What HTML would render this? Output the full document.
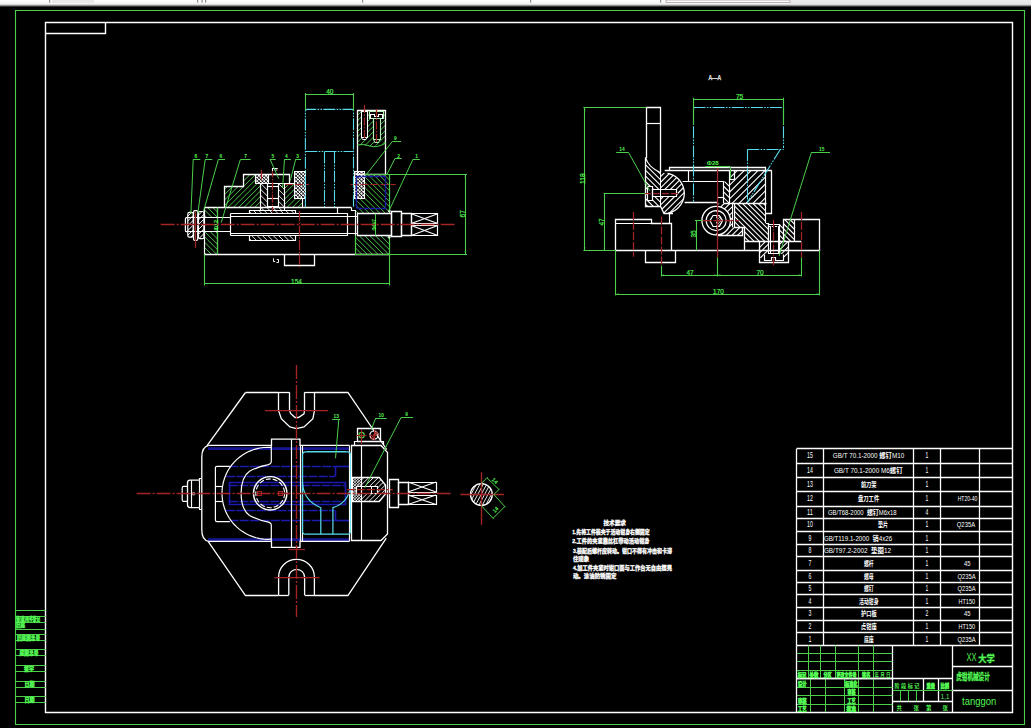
<!DOCTYPE html>
<html><head><meta charset="utf-8"><title>drawing</title>
<style>
html,body{margin:0;padding:0;background:#000;overflow:hidden}
body{width:1031px;height:728px;position:relative}
svg{position:absolute;left:0;top:0;display:block}
svg text{font-family:"Liberation Sans","Noto Sans CJK SC",sans-serif;white-space:pre}
</style></head><body>
<svg width="1031" height="728" viewBox="0 0 1031 728" stroke-linecap="butt">
<defs>
<linearGradient id="tb" x1="0" y1="0" x2="0" y2="1"><stop offset="0" stop-color="#fdfdfd"/><stop offset="0.58" stop-color="#f2f2f2"/><stop offset="0.8" stop-color="#8a8a8a"/><stop offset="1" stop-color="#000"/></linearGradient>
<linearGradient id="tb2" x1="0" y1="0" x2="0" y2="1"><stop offset="0" stop-color="#ececec"/><stop offset="0.62" stop-color="#e4e4e4"/><stop offset="0.82" stop-color="#808080"/><stop offset="1" stop-color="#000"/></linearGradient>
<clipPath id="h1"><path d="M204.5 207.4 L217.6 207.4 L217.6 217.6 L204.5 217.6Z" clip-rule="evenodd" fill-rule="evenodd"/></clipPath>
<clipPath id="h2"><path d="M204.5 231.6 L217.6 231.6 L217.6 254.3 L204.5 254.3Z" clip-rule="evenodd" fill-rule="evenodd"/></clipPath>
<clipPath id="h3"><path d="M224.5 206.9 L224.5 186.6 L243.8 186.6 L243.8 174.7 L255.4 174.7 L255.4 183.5 L260.3 183.5 L260.3 206.9Z" clip-rule="evenodd" fill-rule="evenodd"/></clipPath>
<clipPath id="h4"><path d="M284 183.5 L294.2 183.5 L294.2 198.6 L302.4 198.6 L302.4 206.9 L284 206.9Z" clip-rule="evenodd" fill-rule="evenodd"/></clipPath>
<clipPath id="h5"><path d="M260.3 183.5 L267 183.5 L267 206.9 L278.2 206.9 L278.2 183.5 L284 183.5 L284 210.4 L260.3 210.4Z" clip-rule="evenodd" fill-rule="evenodd"/></clipPath>
<clipPath id="h6"><path d="M255.6 174.9 L268.7 174.9 L268.7 183.4 L255.6 183.4Z" clip-rule="evenodd" fill-rule="evenodd"/></clipPath>
<clipPath id="h7"><path d="M255.6 174.9 L268.7 174.9 L268.7 183.4 L255.6 183.4Z" clip-rule="evenodd" fill-rule="evenodd"/></clipPath>
<clipPath id="h8"><path d="M294.4 171.5 L305 171.5 L305 198.6 L294.4 198.6Z" clip-rule="evenodd" fill-rule="evenodd"/></clipPath>
<clipPath id="h9"><path d="M294.4 171.5 L305 171.5 L305 198.6 L294.4 198.6Z" clip-rule="evenodd" fill-rule="evenodd"/></clipPath>
<clipPath id="h10"><path d="M354.4 171.5 L364.6 171.5 L364.6 198.6 L354.4 198.6Z" clip-rule="evenodd" fill-rule="evenodd"/></clipPath>
<clipPath id="h11"><path d="M354.4 171.5 L364.6 171.5 L364.6 198.6 L354.4 198.6Z" clip-rule="evenodd" fill-rule="evenodd"/></clipPath>
<clipPath id="h12"><path d="M249.2 210.4 L295.4 210.4 L295.4 213.5 L249.2 213.5Z" clip-rule="evenodd" fill-rule="evenodd"/></clipPath>
<clipPath id="h13"><path d="M249.2 235.6 L295.4 235.6 L295.4 240 L249.2 240Z" clip-rule="evenodd" fill-rule="evenodd"/></clipPath>
<clipPath id="h14"><path d="M364.6 174.2 L389.4 174.2 L389.4 213.4 L355.6 213.4 L355.6 198.6 L364.6 198.6Z" clip-rule="evenodd" fill-rule="evenodd"/></clipPath>
<clipPath id="h15"><path d="M355.6 235.6 L389.2 235.6 L389.2 254.2 L355.6 254.2Z" clip-rule="evenodd" fill-rule="evenodd"/></clipPath>
<clipPath id="h16"><path d="M357.3 110.2 L385.8 110.2 L385.8 143 L372 146.5 L357.3 145Z M361.5 110.2 L367 110.2 L367 139 L361.5 139Z M369.8 110.2 L383.4 110.2 L383.4 118.8 L380 118.8 L380 141.5 L373.4 141.5 L373.4 118.8 L369.8 118.8Z" clip-rule="evenodd" fill-rule="evenodd"/></clipPath>
<clipPath id="h17"><path d="M187.8 212.4 L193.2 212.4 L193.2 237.1 L187.8 237.1Z" clip-rule="evenodd" fill-rule="evenodd"/></clipPath>
<clipPath id="h18"><path d="M198.5 211.5 L203.9 211.5 L203.9 238.7 L198.5 238.7Z" clip-rule="evenodd" fill-rule="evenodd"/></clipPath>
<clipPath id="h19"><path d="M645.6 157.6 L648 163 L652 168 L660.6 172.7 L660.6 206.3 L645.6 206.3Z M647.6 186.4 L652.4 186.4 L652.4 189.8 L660.6 189.8 L660.6 196.7 L652.4 196.7 L652.4 200.1 L647.6 200.1Z" clip-rule="evenodd" fill-rule="evenodd"/></clipPath>
<clipPath id="h20"><path d="M660.6 172.7 L667.53 173.31 L670.53 174.08 L673.39 175.3 L676.03 176.95 L678.38 178.97 L680.4 181.34 L682.03 183.98 L683.24 186.84 L684.01 189.85 L684.3 192.95 L684.11 196.05 L683.46 199.08 L682.35 201.99 L680.81 204.68 L678.87 207.12 L676.59 209.22 L674.01 210.96 L671.2 212.28 L668.22 213.16 L664 213.2 L660.6 206.3Z M660.6 189.8 L676.4 189.8 L676.4 196.7 L660.6 196.7Z" clip-rule="evenodd" fill-rule="evenodd"/></clipPath>
<clipPath id="h21"><path d="M723.8 181.6 L729.6 181.6 L729.6 203.4 L723.8 203.4Z" clip-rule="evenodd" fill-rule="evenodd"/></clipPath>
<clipPath id="h22"><path d="M729.6 170.4 L765.8 170.4 L765.8 203.5 L729.6 203.5Z" clip-rule="evenodd" fill-rule="evenodd"/></clipPath>
<clipPath id="h23"><path d="M734.2 203.5 L765.8 203.5 L765.8 223 L768.2 223 L768.2 241.4 L744.6 241.4 L744.6 227.3 L734.2 227.3Z" clip-rule="evenodd" fill-rule="evenodd"/></clipPath>
<clipPath id="h24"><path d="M717.3 203.5 L732.7 203.5 L732.7 227.3 L742.5 227.3 L742.5 235.8 L717.3 235.8Z M716.2 206.3 L719.9 206.79 L723.35 208.22 L726.31 210.49 L728.58 213.45 L730.01 216.9 L730.5 220.6 L730.01 224.3 L728.58 227.75 L726.31 230.71 L723.35 232.98 L719.9 234.41 L716.2 234.9Z" clip-rule="evenodd" fill-rule="evenodd"/></clipPath>
<clipPath id="h25"><path d="M716.2 214.6 L718.5 215.06 L720.44 216.36 L721.74 218.3 L722.2 220.6 L721.74 222.9 L720.44 224.84 L718.5 226.14 L716.2 226.6Z" clip-rule="evenodd" fill-rule="evenodd"/></clipPath>
<clipPath id="h26"><path d="M783.4 219.6 L794.6 219.6 L794.6 241.7 L779.7 241.7 L779.7 224 L783.4 224Z" clip-rule="evenodd" fill-rule="evenodd"/></clipPath>
<clipPath id="h27"><path d="M759.6 241.4 L769.2 241.4 L769.2 254 L764.7 254 L764.7 258 L759.6 258Z" clip-rule="evenodd" fill-rule="evenodd"/></clipPath>
<clipPath id="h28"><path d="M779 241.4 L788.9 241.4 L788.9 258 L783.6 258 L783.6 254 L779 254Z" clip-rule="evenodd" fill-rule="evenodd"/></clipPath>
<clipPath id="h29"><path d="M352.1 477.4 L361.8 477.4 L361.8 501.6 L352.1 501.6Z M356.6 486.3 L361.8 486.3 L361.8 493.3 L356.6 493.3Z" clip-rule="evenodd" fill-rule="evenodd"/></clipPath>
<clipPath id="h30"><path d="M361.8 477.4 L379.3 477.4 L385.3 485 L385.3 494 L379.3 501.6 L361.8 501.6Z M361.8 486.3 L377 486.3 L377 493.3 L361.8 493.3Z" clip-rule="evenodd" fill-rule="evenodd"/></clipPath>
<clipPath id="h31"><path d="M492.3 494.5 L491.93 497.32 L490.84 499.95 L489.11 502.21 L486.85 503.94 L484.22 505.03 L481.4 505.4 L478.58 505.03 L475.95 503.94 L473.69 502.21 L471.96 499.95 L470.87 497.32 L470.5 494.5 L470.87 491.68 L471.96 489.05 L473.69 486.79 L475.95 485.06 L478.58 483.97 L481.4 483.6 L484.22 483.97 L486.85 485.06 L489.11 486.79 L490.84 489.05 L491.93 491.68 L492.3 494.5Z" clip-rule="evenodd" fill-rule="evenodd"/></clipPath>
</defs>
<rect x="0" y="0" width="1031" height="728" fill="#000"/>
<polygon points="15.5,10.5 1024.5,10.5 1024.5,724.5 15.5,724.5" fill="none" stroke="#4cd04c" stroke-width="1.1"/>
<polygon points="45.5,22.5 1012.5,22.5 1012.5,712.5 45.5,712.5" fill="none" stroke="#ffffff" stroke-width="1.42"/>
<polyline points="45.6,33.5 105.5,33.5 105.5,22.5" fill="none" stroke="#ffffff" stroke-width="1.42"/>
<line x1="15.5" y1="610.5" x2="45.6" y2="610.5" stroke="#4cd04c" stroke-width="0.99"/>
<line x1="15.5" y1="616.5" x2="45.6" y2="616.5" stroke="#4cd04c" stroke-width="0.99"/>
<line x1="15.5" y1="622.5" x2="45.6" y2="622.5" stroke="#4cd04c" stroke-width="0.99"/>
<line x1="15.5" y1="629.5" x2="45.6" y2="629.5" stroke="#4cd04c" stroke-width="0.99"/>
<line x1="15.5" y1="634.5" x2="45.6" y2="634.5" stroke="#4cd04c" stroke-width="0.99"/>
<line x1="15.5" y1="640.5" x2="45.6" y2="640.5" stroke="#4cd04c" stroke-width="0.99"/>
<line x1="15.5" y1="649.5" x2="45.6" y2="649.5" stroke="#4cd04c" stroke-width="0.99"/>
<line x1="15.5" y1="655.5" x2="45.6" y2="655.5" stroke="#4cd04c" stroke-width="0.99"/>
<line x1="15.5" y1="665.5" x2="45.6" y2="665.5" stroke="#4cd04c" stroke-width="0.99"/>
<line x1="15.5" y1="671.5" x2="45.6" y2="671.5" stroke="#4cd04c" stroke-width="0.99"/>
<line x1="15.5" y1="681.5" x2="45.6" y2="681.5" stroke="#4cd04c" stroke-width="0.99"/>
<line x1="15.5" y1="687.5" x2="45.6" y2="687.5" stroke="#4cd04c" stroke-width="0.99"/>
<line x1="15.5" y1="696.5" x2="45.6" y2="696.5" stroke="#4cd04c" stroke-width="0.99"/>
<line x1="15.5" y1="702.5" x2="45.6" y2="702.5" stroke="#4cd04c" stroke-width="0.99"/>
<text x="16" y="621.2" font-size="6" fill="#54f654" stroke="#54f654" stroke-width="0.5" textLength="24" lengthAdjust="spacingAndGlyphs" font-weight="bold">借(通)用件登记</text>
<text x="16" y="627.4" font-size="6" fill="#54f654" stroke="#54f654" stroke-width="0.5" textLength="9" lengthAdjust="spacingAndGlyphs" font-weight="bold">旧底</text>
<text x="17" y="640" font-size="6" fill="#54f654" stroke="#54f654" stroke-width="0.5" textLength="23" lengthAdjust="spacingAndGlyphs" font-weight="bold">旧底图总号</text>
<text x="19.5" y="655" font-size="6" fill="#54f654" stroke="#54f654" stroke-width="0.5" textLength="19" lengthAdjust="spacingAndGlyphs" font-weight="bold">底图总号</text>
<text x="24" y="670.6" font-size="6" fill="#54f654" stroke="#54f654" stroke-width="0.5" textLength="10" lengthAdjust="spacingAndGlyphs" font-weight="bold">签字</text>
<text x="24.5" y="686.4" font-size="6" fill="#54f654" stroke="#54f654" stroke-width="0.5" textLength="10" lengthAdjust="spacingAndGlyphs" font-weight="bold">日期</text>
<text x="24.5" y="701.6" font-size="6" fill="#54f654" stroke="#54f654" stroke-width="0.5" textLength="10" lengthAdjust="spacingAndGlyphs" font-weight="bold">日期</text>
<line x1="796.6" y1="448.5" x2="1012.5" y2="448.5" stroke="#ffffff" stroke-width="1.3"/>
<line x1="796.6" y1="463.5" x2="1012.5" y2="463.5" stroke="#ffffff" stroke-width="1.3"/>
<line x1="796.6" y1="477.5" x2="1012.5" y2="477.5" stroke="#ffffff" stroke-width="1.3"/>
<line x1="796.6" y1="491.5" x2="1012.5" y2="491.5" stroke="#ffffff" stroke-width="1.3"/>
<line x1="796.6" y1="506.5" x2="1012.5" y2="506.5" stroke="#ffffff" stroke-width="1.3"/>
<line x1="796.6" y1="518.5" x2="1012.5" y2="518.5" stroke="#ffffff" stroke-width="1.3"/>
<line x1="796.6" y1="531.5" x2="1012.5" y2="531.5" stroke="#ffffff" stroke-width="1.3"/>
<line x1="796.6" y1="544.5" x2="1012.5" y2="544.5" stroke="#ffffff" stroke-width="1.3"/>
<line x1="796.6" y1="556.5" x2="1012.5" y2="556.5" stroke="#ffffff" stroke-width="1.3"/>
<line x1="796.6" y1="570.5" x2="1012.5" y2="570.5" stroke="#ffffff" stroke-width="1.3"/>
<line x1="796.6" y1="582.5" x2="1012.5" y2="582.5" stroke="#ffffff" stroke-width="1.3"/>
<line x1="796.6" y1="594.5" x2="1012.5" y2="594.5" stroke="#ffffff" stroke-width="1.3"/>
<line x1="796.6" y1="607.5" x2="1012.5" y2="607.5" stroke="#ffffff" stroke-width="1.3"/>
<line x1="796.6" y1="620.5" x2="1012.5" y2="620.5" stroke="#ffffff" stroke-width="1.3"/>
<line x1="796.6" y1="632.5" x2="1012.5" y2="632.5" stroke="#ffffff" stroke-width="1.3"/>
<line x1="796.6" y1="645.5" x2="1012.5" y2="645.5" stroke="#ffffff" stroke-width="1.3"/>
<line x1="796.5" y1="448.8" x2="796.5" y2="645.4" stroke="#ffffff" stroke-width="1.3"/>
<line x1="823.5" y1="448.8" x2="823.5" y2="645.4" stroke="#ffffff" stroke-width="1.3"/>
<line x1="913.5" y1="448.8" x2="913.5" y2="645.4" stroke="#ffffff" stroke-width="1.3"/>
<line x1="940.5" y1="448.8" x2="940.5" y2="645.4" stroke="#ffffff" stroke-width="1.3"/>
<line x1="979.5" y1="448.8" x2="979.5" y2="645.4" stroke="#ffffff" stroke-width="1.3"/>
<text x="810" y="458.45" font-size="8.2" fill="#ffffff" text-anchor="middle" textLength="5.8" lengthAdjust="spacingAndGlyphs">15</text>
<text x="832.8" y="458.45" font-size="7" fill="#ffffff" textLength="71.4" lengthAdjust="spacingAndGlyphs">GB/T 70.1-2000 <tspan font-weight="bold">螺钉</tspan>M10</text>
<text x="927" y="458.45" font-size="8.2" fill="#ffffff" text-anchor="middle" textLength="2.8" lengthAdjust="spacingAndGlyphs">1</text>
<text x="810" y="472.65" font-size="8.2" fill="#ffffff" text-anchor="middle" textLength="5.8" lengthAdjust="spacingAndGlyphs">14</text>
<text x="833.9" y="472.65" font-size="7" fill="#ffffff" textLength="68.7" lengthAdjust="spacingAndGlyphs">GB/T 70.1-2000 M6<tspan font-weight="bold">螺钉</tspan></text>
<text x="927" y="472.65" font-size="8.2" fill="#ffffff" text-anchor="middle" textLength="2.8" lengthAdjust="spacingAndGlyphs">1</text>
<text x="810" y="486.9" font-size="8.2" fill="#ffffff" text-anchor="middle" textLength="5.8" lengthAdjust="spacingAndGlyphs">13</text>
<text x="860.9" y="486.9" font-size="7" fill="#ffffff" textLength="15.6" lengthAdjust="spacingAndGlyphs"><tspan font-weight="bold">前刀架</tspan></text>
<text x="927" y="486.9" font-size="8.2" fill="#ffffff" text-anchor="middle" textLength="2.8" lengthAdjust="spacingAndGlyphs">1</text>
<text x="810" y="501.4" font-size="8.2" fill="#ffffff" text-anchor="middle" textLength="5.8" lengthAdjust="spacingAndGlyphs">12</text>
<text x="858" y="501.4" font-size="7" fill="#ffffff" textLength="21.2" lengthAdjust="spacingAndGlyphs"><tspan font-weight="bold">盘刀工件</tspan></text>
<text x="927" y="501.4" font-size="8.2" fill="#ffffff" text-anchor="middle" textLength="2.8" lengthAdjust="spacingAndGlyphs">1</text>
<text x="957.7" y="501.4" font-size="7.4" fill="#ffffff" textLength="19.7" lengthAdjust="spacingAndGlyphs">HT20-40</text>
<text x="810" y="514.8" font-size="8.2" fill="#ffffff" text-anchor="middle" textLength="5.8" lengthAdjust="spacingAndGlyphs">11</text>
<text x="827.9" y="514.8" font-size="7" fill="#ffffff" textLength="68.7" lengthAdjust="spacingAndGlyphs">GB/T68-2000  <tspan font-weight="bold">螺钉</tspan>M6x18</text>
<text x="927" y="514.8" font-size="8.2" fill="#ffffff" text-anchor="middle" textLength="2.8" lengthAdjust="spacingAndGlyphs">4</text>
<text x="810" y="527.45" font-size="8.2" fill="#ffffff" text-anchor="middle" textLength="5.8" lengthAdjust="spacingAndGlyphs">10</text>
<text x="878.1" y="527.45" font-size="7" fill="#ffffff" textLength="10" lengthAdjust="spacingAndGlyphs"><tspan font-weight="bold">垫片</tspan></text>
<text x="927" y="527.45" font-size="8.2" fill="#ffffff" text-anchor="middle" textLength="2.8" lengthAdjust="spacingAndGlyphs">1</text>
<text x="956.8" y="527.45" font-size="7.4" fill="#ffffff" textLength="18.3" lengthAdjust="spacingAndGlyphs">Q235A</text>
<text x="810" y="540.6" font-size="8.2" fill="#ffffff" text-anchor="middle" textLength="2.9" lengthAdjust="spacingAndGlyphs">9</text>
<text x="823.9" y="540.6" font-size="7" fill="#ffffff" textLength="68.3" lengthAdjust="spacingAndGlyphs">GB/T119.1-2000  <tspan font-weight="bold">销</tspan>4x26</text>
<text x="927" y="540.6" font-size="8.2" fill="#ffffff" text-anchor="middle" textLength="2.8" lengthAdjust="spacingAndGlyphs">1</text>
<text x="810" y="553.25" font-size="8.2" fill="#ffffff" text-anchor="middle" textLength="2.9" lengthAdjust="spacingAndGlyphs">8</text>
<text x="823.9" y="553.25" font-size="7" fill="#ffffff" textLength="67.1" lengthAdjust="spacingAndGlyphs">GB/T97.2-2002  <tspan font-weight="bold">垫圈</tspan>12</text>
<text x="927" y="553.25" font-size="8.2" fill="#ffffff" text-anchor="middle" textLength="2.8" lengthAdjust="spacingAndGlyphs">1</text>
<text x="810" y="565.9" font-size="8.2" fill="#ffffff" text-anchor="middle" textLength="2.9" lengthAdjust="spacingAndGlyphs">7</text>
<text x="864" y="565.9" font-size="7" fill="#ffffff" textLength="9.7" lengthAdjust="spacingAndGlyphs"><tspan font-weight="bold">螺杆</tspan></text>
<text x="927" y="565.9" font-size="8.2" fill="#ffffff" text-anchor="middle" textLength="2.8" lengthAdjust="spacingAndGlyphs">1</text>
<text x="964" y="565.9" font-size="7.4" fill="#ffffff" textLength="6.5" lengthAdjust="spacingAndGlyphs">45</text>
<text x="810" y="578.7" font-size="8.2" fill="#ffffff" text-anchor="middle" textLength="2.9" lengthAdjust="spacingAndGlyphs">6</text>
<text x="864" y="578.7" font-size="7" fill="#ffffff" textLength="9.7" lengthAdjust="spacingAndGlyphs"><tspan font-weight="bold">螺母</tspan></text>
<text x="927" y="578.7" font-size="8.2" fill="#ffffff" text-anchor="middle" textLength="2.8" lengthAdjust="spacingAndGlyphs">1</text>
<text x="957.5" y="578.7" font-size="7.4" fill="#ffffff" textLength="18" lengthAdjust="spacingAndGlyphs">Q235A</text>
<text x="810" y="591.1" font-size="8.2" fill="#ffffff" text-anchor="middle" textLength="2.9" lengthAdjust="spacingAndGlyphs">5</text>
<text x="864" y="591.1" font-size="7" fill="#ffffff" textLength="9.7" lengthAdjust="spacingAndGlyphs"><tspan font-weight="bold">螺钉</tspan></text>
<text x="927" y="591.1" font-size="8.2" fill="#ffffff" text-anchor="middle" textLength="2.8" lengthAdjust="spacingAndGlyphs">1</text>
<text x="957.5" y="591.1" font-size="7.4" fill="#ffffff" textLength="18" lengthAdjust="spacingAndGlyphs">Q235A</text>
<text x="810" y="603.6" font-size="8.2" fill="#ffffff" text-anchor="middle" textLength="2.9" lengthAdjust="spacingAndGlyphs">4</text>
<text x="859.1" y="603.6" font-size="7" fill="#ffffff" textLength="19.5" lengthAdjust="spacingAndGlyphs"><tspan font-weight="bold">活动钳身</tspan></text>
<text x="927" y="603.6" font-size="8.2" fill="#ffffff" text-anchor="middle" textLength="2.8" lengthAdjust="spacingAndGlyphs">1</text>
<text x="958.5" y="603.6" font-size="7.4" fill="#ffffff" textLength="16.5" lengthAdjust="spacingAndGlyphs">HT150</text>
<text x="810" y="616.25" font-size="8.2" fill="#ffffff" text-anchor="middle" textLength="2.9" lengthAdjust="spacingAndGlyphs">3</text>
<text x="861" y="616.25" font-size="7" fill="#ffffff" textLength="15.6" lengthAdjust="spacingAndGlyphs"><tspan font-weight="bold">护口板</tspan></text>
<text x="927" y="616.25" font-size="8.2" fill="#ffffff" text-anchor="middle" textLength="2.8" lengthAdjust="spacingAndGlyphs">2</text>
<text x="964" y="616.25" font-size="7.4" fill="#ffffff" textLength="6.5" lengthAdjust="spacingAndGlyphs">45</text>
<text x="810" y="628.95" font-size="8.2" fill="#ffffff" text-anchor="middle" textLength="2.9" lengthAdjust="spacingAndGlyphs">2</text>
<text x="861" y="628.95" font-size="7" fill="#ffffff" textLength="15.6" lengthAdjust="spacingAndGlyphs"><tspan font-weight="bold">虎钳座</tspan></text>
<text x="927" y="628.95" font-size="8.2" fill="#ffffff" text-anchor="middle" textLength="2.8" lengthAdjust="spacingAndGlyphs">1</text>
<text x="958.5" y="628.95" font-size="7.4" fill="#ffffff" textLength="16.5" lengthAdjust="spacingAndGlyphs">HT150</text>
<text x="810" y="641.6" font-size="8.2" fill="#ffffff" text-anchor="middle" textLength="2.9" lengthAdjust="spacingAndGlyphs">1</text>
<text x="864" y="641.6" font-size="7" fill="#ffffff" textLength="9.7" lengthAdjust="spacingAndGlyphs"><tspan font-weight="bold">底座</tspan></text>
<text x="927" y="641.6" font-size="8.2" fill="#ffffff" text-anchor="middle" textLength="2.8" lengthAdjust="spacingAndGlyphs">1</text>
<text x="957.5" y="641.6" font-size="7.4" fill="#ffffff" textLength="18" lengthAdjust="spacingAndGlyphs">Q235A</text>
<line x1="892.5" y1="645.4" x2="892.5" y2="712" stroke="#ffffff" stroke-width="1.3"/>
<line x1="952.5" y1="645.4" x2="952.5" y2="712" stroke="#ffffff" stroke-width="1.3"/>
<line x1="952.6" y1="666.5" x2="1012.5" y2="666.5" stroke="#ffffff" stroke-width="1.3"/>
<line x1="952.6" y1="690.5" x2="1012.5" y2="690.5" stroke="#ffffff" stroke-width="1.3"/>
<line x1="892.6" y1="678.5" x2="952.6" y2="678.5" stroke="#ffffff" stroke-width="1.3"/>
<line x1="892.6" y1="701.5" x2="952.6" y2="701.5" stroke="#ffffff" stroke-width="1.3"/>
<line x1="923.5" y1="678.3" x2="923.5" y2="701.3" stroke="#ffffff" stroke-width="1.3"/>
<line x1="938.5" y1="678.3" x2="938.5" y2="701.3" stroke="#ffffff" stroke-width="1.3"/>
<line x1="892.6" y1="690.5" x2="953" y2="690.5" stroke="#4cd04c" stroke-width="0.99"/>
<line x1="900.5" y1="690.3" x2="900.5" y2="701.3" stroke="#4cd04c" stroke-width="0.99"/>
<line x1="908.5" y1="690.3" x2="908.5" y2="701.3" stroke="#4cd04c" stroke-width="0.99"/>
<line x1="916.5" y1="690.3" x2="916.5" y2="701.3" stroke="#4cd04c" stroke-width="0.99"/>
<line x1="796.6" y1="653.5" x2="892.6" y2="653.5" stroke="#4cd04c" stroke-width="0.99"/>
<line x1="796.6" y1="661.5" x2="892.6" y2="661.5" stroke="#4cd04c" stroke-width="0.99"/>
<line x1="796.6" y1="670.5" x2="892.6" y2="670.5" stroke="#4cd04c" stroke-width="0.99"/>
<line x1="796.6" y1="678.5" x2="892.6" y2="678.5" stroke="#ffffff" stroke-width="1.3"/>
<line x1="796.6" y1="687.5" x2="892.6" y2="687.5" stroke="#4cd04c" stroke-width="0.99"/>
<line x1="796.6" y1="695.5" x2="892.6" y2="695.5" stroke="#4cd04c" stroke-width="0.99"/>
<line x1="796.6" y1="704.5" x2="892.6" y2="704.5" stroke="#4cd04c" stroke-width="0.99"/>
<line x1="808.5" y1="645.4" x2="808.5" y2="678.3" stroke="#4cd04c" stroke-width="0.99"/>
<line x1="820.5" y1="645.4" x2="820.5" y2="678.3" stroke="#4cd04c" stroke-width="0.99"/>
<line x1="835.5" y1="645.4" x2="835.5" y2="678.3" stroke="#4cd04c" stroke-width="0.99"/>
<line x1="858.5" y1="645.4" x2="858.5" y2="678.3" stroke="#4cd04c" stroke-width="0.99"/>
<line x1="873.5" y1="645.4" x2="873.5" y2="678.3" stroke="#4cd04c" stroke-width="0.99"/>
<line x1="810.5" y1="678.3" x2="810.5" y2="712" stroke="#4cd04c" stroke-width="0.99"/>
<line x1="825.5" y1="678.3" x2="825.5" y2="712" stroke="#4cd04c" stroke-width="0.99"/>
<line x1="844.5" y1="678.3" x2="844.5" y2="712" stroke="#4cd04c" stroke-width="0.99"/>
<line x1="858.5" y1="678.3" x2="858.5" y2="712" stroke="#4cd04c" stroke-width="0.99"/>
<line x1="873.5" y1="678.3" x2="873.5" y2="712" stroke="#4cd04c" stroke-width="0.99"/>
<line x1="796.5" y1="645.4" x2="796.5" y2="712" stroke="#ffffff" stroke-width="1.3"/>
<line x1="796.6" y1="678.5" x2="892.6" y2="678.5" stroke="#ffffff" stroke-width="1.3"/>
<text x="797.8" y="677" font-size="5.4" fill="#54f654" stroke="#54f654" stroke-width="0.6" textLength="8.5" lengthAdjust="spacingAndGlyphs" font-weight="bold">标记</text>
<text x="809.5" y="677" font-size="5.4" fill="#54f654" stroke="#54f654" stroke-width="0.6" textLength="9" lengthAdjust="spacingAndGlyphs" font-weight="bold">处数</text>
<text x="823.5" y="677" font-size="5.4" fill="#54f654" stroke="#54f654" stroke-width="0.6" textLength="8" lengthAdjust="spacingAndGlyphs" font-weight="bold">分区</text>
<text x="836.5" y="677" font-size="5.4" fill="#54f654" stroke="#54f654" stroke-width="0.6" textLength="20" lengthAdjust="spacingAndGlyphs" font-weight="bold">更改文件号</text>
<text x="862" y="677" font-size="5.4" fill="#54f654" stroke="#54f654" stroke-width="0.6" textLength="8.5" lengthAdjust="spacingAndGlyphs" font-weight="bold">签名</text>
<text x="874.5" y="677" font-size="5.4" fill="#54f654" textLength="16" lengthAdjust="spacingAndGlyphs" font-weight="bold">年 月 日</text>
<text x="798" y="686" font-size="5.4" fill="#54f654" stroke="#54f654" stroke-width="0.6" textLength="8.5" lengthAdjust="spacingAndGlyphs" font-weight="bold">设计</text>
<text x="845" y="686" font-size="5.4" fill="#54f654" stroke="#54f654" stroke-width="0.6" textLength="12.5" lengthAdjust="spacingAndGlyphs" font-weight="bold">标准化</text>
<text x="847.5" y="694.4" font-size="5.4" fill="#54f654" stroke="#54f654" stroke-width="0.6" textLength="8" lengthAdjust="spacingAndGlyphs" font-weight="bold">审核</text>
<text x="798" y="703" font-size="5.4" fill="#54f654" stroke="#54f654" stroke-width="0.6" textLength="8.5" lengthAdjust="spacingAndGlyphs" font-weight="bold">审核</text>
<text x="847.5" y="702.8" font-size="5.4" fill="#54f654" stroke="#54f654" stroke-width="0.6" textLength="8" lengthAdjust="spacingAndGlyphs" font-weight="bold">工艺</text>
<text x="798" y="711" font-size="5.4" fill="#54f654" stroke="#54f654" stroke-width="0.6" textLength="8.5" lengthAdjust="spacingAndGlyphs" font-weight="bold">工艺</text>
<text x="846.5" y="711" font-size="5.4" fill="#54f654" stroke="#54f654" stroke-width="0.6" textLength="9.5" lengthAdjust="spacingAndGlyphs" font-weight="bold">批准</text>
<text x="894.5" y="687.8" font-size="5.4" fill="#54f654" textLength="25" lengthAdjust="spacingAndGlyphs" font-weight="bold">阶 段 标 记</text>
<text x="926.5" y="687.8" font-size="5.4" fill="#54f654" stroke="#54f654" stroke-width="0.6" textLength="8.5" lengthAdjust="spacingAndGlyphs" font-weight="bold">重量</text>
<text x="940.5" y="687.8" font-size="5.4" fill="#54f654" stroke="#54f654" stroke-width="0.6" textLength="8.5" lengthAdjust="spacingAndGlyphs" font-weight="bold">比例</text>
<text x="940.8" y="698.6" font-size="6.6" fill="#54f654" textLength="8.5" lengthAdjust="spacingAndGlyphs">1,1</text>
<text x="896.5" y="710" font-size="5.4" fill="#54f654" font-weight="bold">共</text>
<text x="913.5" y="710" font-size="5.4" fill="#54f654" font-weight="bold">张</text>
<text x="926" y="710" font-size="5.4" fill="#54f654" font-weight="bold">第</text>
<text x="942.5" y="710" font-size="5.4" fill="#54f654" font-weight="bold">张</text>
<text x="966.6" y="661" font-size="10.8" fill="#54f654" textLength="10" lengthAdjust="spacingAndGlyphs">XX</text>
<text x="978.2" y="661.6" font-size="9.4" fill="#54f654" stroke="#54f654" stroke-width="0.3" textLength="16.6" lengthAdjust="spacingAndGlyphs" font-weight="bold">大学</text>
<text x="956.2" y="680.2" font-size="8.6" fill="#54f654" stroke="#54f654" stroke-width="0.35" textLength="33.6" lengthAdjust="spacingAndGlyphs" font-weight="bold">虎钳机械设计</text>
<text x="962" y="704.8" font-size="10" fill="#54f654" textLength="34.2" lengthAdjust="spacingAndGlyphs">tanggon</text>
<path clip-path="url(#h1)" d="M212.55 196.43L227.12 211M209.86 199.12L224.43 213.69M207.18 201.8L221.75 216.37M204.49 204.49L219.06 219.06M201.8 207.18L216.37 221.75M199.12 209.86L213.69 224.43M196.43 212.55L211 227.12" stroke="#54e054" stroke-width="0.85" fill="none"/>
<path clip-path="url(#h2)" d="M213.63 219.01L234.99 240.37M210.95 221.69L232.31 243.05M208.26 224.38L229.62 245.74M205.57 227.07L226.93 248.43M202.88 229.75L224.25 251.12M200.2 232.44L221.56 253.8M197.51 235.13L218.87 256.49M194.82 237.82L216.18 259.18M192.14 240.5L213.5 261.86M189.45 243.19L210.81 264.55" stroke="#54e054" stroke-width="0.85" fill="none"/>
<path clip-path="url(#h3)" d="M203.51 188.79L240.39 151.91M206.2 191.48L243.08 154.6M208.89 194.16L245.76 157.29M211.57 196.85L248.45 159.97M214.26 199.54L251.14 162.66M216.95 202.22L253.82 165.35M219.64 204.91L256.51 168.04M222.32 207.6L259.2 170.72M225.01 210.29L261.89 173.41M227.7 212.97L264.57 176.1M230.38 215.66L267.26 178.78M233.07 218.35L269.95 181.47M235.76 221.03L272.63 184.16M238.44 223.72L275.32 186.84M241.13 226.41L278.01 189.53M243.82 229.09L280.69 192.22" stroke="#54e054" stroke-width="0.85" fill="none"/>
<path clip-path="url(#h4)" d="M268.14 194.02L292.02 170.14M270.83 196.71L294.71 172.83M273.52 199.4L297.4 175.52M276.2 202.08L300.08 178.2M278.89 204.77L302.77 180.89M281.58 207.46L305.46 183.58M284.27 210.14L308.14 186.27M286.95 212.83L310.83 188.95M289.64 215.52L313.52 191.64M292.33 218.2L316.2 194.33M295.01 220.89L318.89 197.01" stroke="#54e054" stroke-width="0.85" fill="none"/>
<path clip-path="url(#h5)" d="M273.92 167L302.1 195.18M270.95 169.97L299.13 198.15M267.98 172.94L296.16 201.12M265.01 175.91L293.19 204.09M262.04 178.88L290.22 207.06M259.07 181.85L287.25 210.03M256.1 184.82L284.28 213M253.13 187.79L281.31 215.97M250.16 190.76L278.34 218.94M247.19 193.73L275.37 221.91M244.22 196.7L272.4 224.88M241.25 199.67L269.43 227.85" stroke="#ffffff" stroke-width="0.9" fill="none"/>
<polygon points="255.5,174.5 268.5,174.5 268.5,183.5 255.5,183.5" fill="#ffffff" stroke="#ffffff" stroke-width="0.59"/>
<path clip-path="url(#h6)" d="M263.21 164.22L277.08 178.09M261.44 165.98L275.32 179.86M259.68 167.75L273.55 181.62M257.91 169.52L271.78 183.39M256.14 171.29L270.01 185.16M254.37 173.06L268.24 186.93M252.61 174.82L266.48 188.69M250.84 176.59L264.71 190.46M249.07 178.36L262.94 192.23M247.3 180.13L261.17 194" stroke="#000" stroke-width="1" fill="none"/>
<path clip-path="url(#h7)" d="M247.55 178.42L261.42 164.55M249.31 180.18L263.18 166.31M251.08 181.95L264.95 168.08M252.85 183.72L266.72 169.85M254.62 185.49L268.49 171.62M256.38 187.25L270.25 173.38M258.15 189.02L272.02 175.15M259.92 190.79L273.79 176.92M261.69 192.56L275.56 178.69M263.46 194.33L277.33 180.46" stroke="#000" stroke-width="0.75" fill="none"/>
<polygon points="294.5,171.5 305.5,171.5 305.5,198.5 294.5,198.5" fill="#ffffff" stroke="#ffffff" stroke-width="0.59"/>
<path clip-path="url(#h8)" d="M301.38 159.96L324.79 183.37M299.62 161.73L323.02 185.13M297.85 163.5L321.25 186.9M296.08 165.27L319.48 188.67M294.31 167.03L317.72 190.44M292.54 168.8L315.95 192.21M290.78 170.57L314.18 193.97M289.01 172.34L312.41 195.74M287.24 174.1L310.65 197.51M285.47 175.87L308.88 199.28M283.71 177.64L307.11 201.04M281.94 179.41L305.34 202.81M280.17 181.18L303.57 204.58M278.4 182.94L301.81 206.35M276.63 184.71L300.04 208.12M274.87 186.48L298.27 209.88" stroke="#000" stroke-width="1" fill="none"/>
<path clip-path="url(#h9)" d="M276.28 185.04L299.69 161.63M278.05 186.8L301.45 163.4M279.82 188.57L303.22 165.17M281.58 190.34L304.99 166.93M283.35 192.11L306.76 168.7M285.12 193.87L308.52 170.47M286.89 195.64L310.29 172.24M288.66 197.41L312.06 174.01M290.42 199.18L313.83 175.77M292.19 200.95L315.6 177.54M293.96 202.71L317.36 179.31M295.73 204.48L319.13 181.08M297.49 206.25L320.9 182.84M299.26 208.02L322.67 184.61M301.03 209.78L324.43 186.38" stroke="#000" stroke-width="0.75" fill="none"/>
<polygon points="354.5,171.5 364.5,171.5 364.5,198.5 354.5,198.5" fill="#ffffff" stroke="#ffffff" stroke-width="0.59"/>
<path clip-path="url(#h10)" d="M359.62 161.63L382.92 184.93M357.85 163.4L381.15 186.7M356.08 165.16L379.39 188.47M354.31 166.93L377.62 190.24M352.55 168.7L375.85 192M350.78 170.47L374.08 193.77M349.01 172.23L372.32 195.54M347.24 174L370.55 197.31M345.48 175.77L368.78 199.07M343.71 177.54L367.01 200.84M341.94 179.31L365.24 202.61M340.17 181.07L363.48 204.38M338.41 182.84L361.71 206.14M336.64 184.61L359.94 207.91M334.87 186.38L358.17 209.68" stroke="#000" stroke-width="1" fill="none"/>
<path clip-path="url(#h11)" d="M336.28 185.14L359.59 161.83M338.05 186.9L361.35 163.6M339.82 188.67L363.12 165.37M341.59 190.44L364.89 167.14M343.35 192.21L366.66 168.9M345.12 193.98L368.43 170.67M346.89 195.74L370.19 172.44M348.66 197.51L371.96 174.21M350.43 199.28L373.73 175.98M352.19 201.05L375.5 177.74M353.96 202.81L377.26 179.51M355.73 204.58L379.03 181.28M357.5 206.35L380.8 183.05M359.26 208.12L382.57 184.81M361.03 209.89L384.34 186.58" stroke="#000" stroke-width="0.75" fill="none"/>
<path clip-path="url(#h12)" d="M272.71 175.97L308.28 211.54M270.02 178.66L305.59 214.23M267.33 181.35L302.9 216.92M264.64 184.03L300.22 219.61M261.96 186.72L297.53 222.29M259.27 189.41L294.84 224.98M256.58 192.1L292.15 227.67M253.9 194.78L289.47 230.35M251.21 197.47L286.78 233.04M248.52 200.16L284.09 235.73M245.84 202.84L281.41 238.41M243.15 205.53L278.72 241.1M240.46 208.22L276.03 243.79M237.77 210.9L273.35 246.48M235.09 213.59L270.66 249.16" stroke="#ffffff" stroke-width="0.9" fill="none"/>
<path clip-path="url(#h13)" d="M274.85 199.61L310.49 235.25M272.16 202.3L307.8 237.94M269.47 204.98L305.12 240.63M266.78 207.67L302.43 243.32M264.1 210.36L299.74 246M261.41 213.04L297.06 248.69M258.72 215.73L294.37 251.38M256.04 218.42L291.68 254.06M253.35 221.11L288.99 256.75M250.66 223.79L286.31 259.44M247.98 226.48L283.62 262.12M245.29 229.17L280.93 264.81M242.6 231.85L278.25 267.5M239.91 234.54L275.56 270.19M237.23 237.23L272.87 272.87M234.54 239.91L270.19 275.56" stroke="#ffffff" stroke-width="0.9" fill="none"/>
<path clip-path="url(#h14)" d="M373.6 153.27L413.03 192.7M370.92 155.96L410.34 195.38M368.23 158.64L407.66 198.07M365.54 161.33L404.97 200.76M362.86 164.02L402.28 203.44M360.17 166.7L399.6 206.13M357.48 169.39L396.91 208.82M354.79 172.08L394.22 211.51M352.11 174.76L391.54 214.19M349.42 177.45L388.85 216.88M346.73 180.14L386.16 219.57M344.05 182.83L383.47 222.25M341.36 185.51L380.79 224.94M338.67 188.2L378.1 227.63M335.99 190.89L375.41 230.31M333.3 193.57L372.73 233M330.61 196.26L370.04 235.69" stroke="#54e054" stroke-width="0.85" fill="none"/>
<path clip-path="url(#h15)" d="M374.27 213.05L404.25 243.03M371.58 215.73L401.57 245.72M368.89 218.42L398.88 248.41M366.21 221.11L396.19 251.09M363.52 223.8L393.5 253.78M360.83 226.48L390.82 256.47M358.15 229.17L388.13 259.15M355.46 231.86L385.44 261.84M352.77 234.54L382.76 264.53M350.08 237.23L380.07 267.22M347.4 239.92L377.38 269.9M344.71 242.6L374.7 272.59M342.02 245.29L372.01 275.28" stroke="#54e054" stroke-width="0.85" fill="none"/>
<path clip-path="url(#h16)" d="M334.95 127.21L370.41 91.75M337.64 129.9L373.1 94.44M340.33 132.59L375.79 97.13M343.01 135.27L378.47 99.81M345.7 137.96L381.16 102.5M348.39 140.65L383.85 105.19M351.07 143.34L386.54 107.87M353.76 146.02L389.22 110.56M356.45 148.71L391.91 113.25M359.13 151.4L394.6 115.93M361.82 154.08L397.28 118.62M364.51 156.77L399.97 121.31M367.2 159.46L402.66 124M369.88 162.14L405.34 126.68M372.57 164.83L408.03 129.37" stroke="#54e054" stroke-width="0.85" fill="none"/>
<path clip-path="url(#h17)" d="M169.66 224.62L190.37 203.91M172.07 227.02L192.77 206.32M174.47 229.43L195.18 208.72M176.88 231.83L197.58 211.13M179.28 234.24L199.99 213.53M181.68 236.64L202.39 215.93M184.09 239.04L204.79 218.34M186.49 241.45L207.2 220.74M188.9 243.85L209.6 223.15M191.3 246.26L212.01 225.55" stroke="#ffffff" stroke-width="1" fill="none"/>
<path clip-path="url(#h18)" d="M176.38 222.71L198.81 200.28M178.78 225.12L201.22 202.68M181.19 227.52L203.62 205.09M183.59 229.93L206.03 207.49M185.99 232.33L208.43 209.89M188.4 234.73L210.83 212.3M190.8 237.14L213.24 214.7M193.21 239.54L215.64 217.11M195.61 241.95L218.05 219.51M198.01 244.35L220.45 221.91M200.42 246.76L222.86 224.32M202.82 249.16L225.26 226.72" stroke="#ffffff" stroke-width="1" fill="none"/>
<line x1="204.5" y1="254.5" x2="389.2" y2="254.5" stroke="#ffffff" stroke-width="1.3"/>
<line x1="204.5" y1="207.5" x2="351.3" y2="207.5" stroke="#ffffff" stroke-width="1.3"/>
<polygon points="204.5,207.5 217.5,207.5 217.5,254.5 204.5,254.5" fill="none" stroke="#ffffff" stroke-width="1.18"/>
<line x1="217.5" y1="207.4" x2="217.5" y2="254.3" stroke="#4cd04c" stroke-width="1.1"/>
<line x1="230.4" y1="213.5" x2="347.8" y2="213.5" stroke="#ffffff" stroke-width="1.18"/>
<line x1="230.4" y1="235.5" x2="347.8" y2="235.5" stroke="#ffffff" stroke-width="1.18"/>
<line x1="230.4" y1="216.5" x2="357.5" y2="216.5" stroke="#ffffff" stroke-width="1.18"/>
<line x1="230.4" y1="233.5" x2="357.5" y2="233.5" stroke="#ffffff" stroke-width="1.18"/>
<line x1="230.5" y1="213.6" x2="230.5" y2="235.4" stroke="#ffffff" stroke-width="1.18"/>
<line x1="188" y1="217.5" x2="230.4" y2="217.5" stroke="#ffffff" stroke-width="1.18"/>
<line x1="188" y1="231.5" x2="230.4" y2="231.5" stroke="#ffffff" stroke-width="1.18"/>
<line x1="347.5" y1="213.6" x2="347.5" y2="235.4" stroke="#ffffff" stroke-width="1.18"/>
<polyline points="351.5,207.4 351.5,210.5 355.5,210.5 355.5,236" fill="none" stroke="#ffffff" stroke-width="1.18"/>
<path d="M188 217.7 L186.6 217.7 Q185.4 217.7 185.4 219 L185.4 230.4 Q185.4 231.7 186.6 231.7 L188 231.7" fill="none" stroke="#ffffff" stroke-width="1.18"/>
<path d="M189.3 212.4 L191.8 212.4 Q193.2 212.4 193.2 214 L193.2 235.5 Q193.2 237.1 191.8 237.1 L189.3 237.1 Q187.8 237.1 187.8 235.5 L187.8 214 Q187.8 212.4 189.3 212.4 Z" fill="none" stroke="#ffffff" stroke-width="1.18"/>
<path d="M194.8 210.7 L196.5 210.7 Q197.7 210.7 197.7 212 L197.7 239.2 Q197.7 240.4 196.5 240.4 L194.8 240.4 Q193.6 240.4 193.6 239.2 L193.6 212 Q193.6 210.7 194.8 210.7 Z" fill="none" stroke="#ffffff" stroke-width="1.18"/>
<path d="M200 211.5 L202.5 211.5 Q203.9 211.5 203.9 213 L203.9 237.2 Q203.9 238.7 202.5 238.7 L200 238.7 Q198.5 238.7 198.5 237.2 L198.5 213 Q198.5 211.5 200 211.5 Z" fill="none" stroke="#ffffff" stroke-width="1.18"/>
<line x1="195.5" y1="212" x2="195.5" y2="247.8" stroke="#a42424" stroke-width="1.25"/>
<polygon points="249.5,210.5 295.5,210.5 295.5,213.5 249.5,213.5" fill="none" stroke="#ffffff" stroke-width="1.18"/>
<polygon points="249.5,235.5 295.5,235.5 295.5,240.5 249.5,240.5" fill="none" stroke="#ffffff" stroke-width="1.18"/>
<polyline points="224.5,206.9 224.5,186.5 243.5,186.5 243.5,174.5 289.5,174.5 289.5,183.5" fill="none" stroke="#ffffff" stroke-width="1.3"/>
<line x1="255.4" y1="183.5" x2="294.2" y2="183.5" stroke="#ffffff" stroke-width="1.18"/>
<line x1="255.5" y1="174.7" x2="255.5" y2="183.5" stroke="#ffffff" stroke-width="1.18"/>
<line x1="268.5" y1="174.7" x2="268.5" y2="183.5" stroke="#ffffff" stroke-width="1.18"/>
<line x1="260.5" y1="183.5" x2="260.5" y2="210.4" stroke="#ffffff" stroke-width="1.18"/>
<line x1="284.5" y1="183.5" x2="284.5" y2="210.4" stroke="#ffffff" stroke-width="1.18"/>
<polygon points="267.5,183.5 278.5,183.5 278.5,206.5 267.5,206.5" fill="none" stroke="#ffffff" stroke-width="1.18"/>
<line x1="267" y1="186.5" x2="278.2" y2="186.5" stroke="#ffffff" stroke-width="1.18"/>
<line x1="267" y1="198.5" x2="278.2" y2="198.5" stroke="#ffffff" stroke-width="1.18"/>
<line x1="302.5" y1="198.6" x2="302.5" y2="206.9" stroke="#ffffff" stroke-width="1.18"/>
<polygon points="294.5,171.5 305.5,171.5 305.5,198.5 294.5,198.5" fill="none" stroke="#ffffff" stroke-width="1.06"/>
<polygon points="354.5,171.5 364.5,171.5 364.5,198.5 354.5,198.5" fill="none" stroke="#ffffff" stroke-width="1.06"/>
<line x1="272.5" y1="169.4" x2="272.5" y2="211.6" stroke="#a42424" stroke-width="1.25" stroke-dasharray="8 1.5 1.5 1.5"/>
<line x1="261.5" y1="169.9" x2="261.5" y2="179.5" stroke="#a42424" stroke-width="1.25"/>
<line x1="285" y1="184.5" x2="308.7" y2="184.5" stroke="#a42424" stroke-width="1.12" stroke-dasharray="8 2"/>
<line x1="350.6" y1="184.5" x2="395.8" y2="184.5" stroke="#a42424" stroke-width="1.12" stroke-dasharray="8 2"/>
<polyline points="272.5,171 272.5,168.5 277.7,168.5" fill="none" stroke="#ffffff" stroke-width="1.06"/>
<text x="274.5" y="171.3" font-size="3.2" fill="#ffffff">r4</text>
<path d="M305.4 207 L305.4 111 Q305.4 109.4 307 109.4 L352 109.4 Q353.5 109.4 353.5 111 L353.5 207" fill="none" stroke="#58dcec" stroke-width="1.1" stroke-dasharray="12 1.3 1.6 1.3 1.6 1.3"/>
<line x1="305.4" y1="151.5" x2="353.5" y2="151.5" stroke="#58dcec" stroke-width="1.1" stroke-dasharray="12 1.3 1.6 1.3 1.6 1.3"/>
<line x1="324.5" y1="151.5" x2="324.5" y2="207" stroke="#58dcec" stroke-width="1.1" stroke-dasharray="12 1.3 1.6 1.3 1.6 1.3"/>
<line x1="334.5" y1="151.5" x2="334.5" y2="207" stroke="#58dcec" stroke-width="1.1" stroke-dasharray="12 1.3 1.6 1.3 1.6 1.3"/>
<line x1="337.5" y1="207.4" x2="337.5" y2="213.6" stroke="#ffffff" stroke-width="1.18"/>
<line x1="305.5" y1="93" x2="305.5" y2="110" stroke="#4cd04c" stroke-width="1.1"/>
<line x1="353.5" y1="93" x2="353.5" y2="111" stroke="#4cd04c" stroke-width="1.1"/>
<line x1="305.4" y1="94.5" x2="353.5" y2="94.5" stroke="#4cd04c" stroke-width="1.1"/>
<polygon points="305.4,94.6 308.6,95.15 308.6,94.05" fill="#4cd04c"/>
<polygon points="353.5,94.6 350.3,94.05 350.3,95.15" fill="#4cd04c"/>
<text x="329.8" y="94.4" font-size="8" fill="#54f654" stroke="#54f654" stroke-width="0.2" text-anchor="middle" textLength="7.2" lengthAdjust="spacingAndGlyphs">40</text>
<polygon points="357.5,110.5 385.5,110.5 385.5,174.5 357.5,174.5" fill="none" stroke="#ffffff" stroke-width="1.3"/>
<path d="M357.3 145 Q364 143.5 370 146 T385.8 143" fill="none" stroke="#4cd04c" stroke-width="0.99"/>
<polygon points="361.5,111.5 367.5,111.5 367.5,137.5 361.5,137.5" fill="none" stroke="#ffffff" stroke-width="1.06"/>
<polyline points="361.5,137.7 362.5,139.5 366,139.5 367,137.7" fill="none" stroke="#ffffff" stroke-width="0.94"/>
<line x1="364.5" y1="105" x2="364.5" y2="139.6" stroke="#a42424" stroke-width="1.25" stroke-dasharray="8 1.5 1.5 1.5"/>
<polygon points="369.5,111.5 383.5,111.5 383.5,118.5 369.5,118.5" fill="none" stroke="#b8f0b8" stroke-width="1.1"/>
<polygon points="373.5,118.5 380.5,118.5 380.5,139.5 373.5,139.5" fill="none" stroke="#b8f0b8" stroke-width="1.1"/>
<polyline points="373.4,139 374.8,142.5 378.6,142.5 380,139" fill="none" stroke="#b8f0b8" stroke-width="0.99"/>
<polyline points="370.5,118.8 370.5,114.5 374.5,114.5 374.5,116.5 378.5,116.5 378.5,114.5 382.5,114.5 382.5,118.8" fill="none" stroke="#ffffff" stroke-width="1.06"/>
<line x1="376.5" y1="109" x2="376.5" y2="142.5" stroke="#a42424" stroke-width="1.25" stroke-dasharray="8 1.5 1.5 1.5"/>
<polyline points="364.6,174.5 389.5,174.5 389.5,213.4" fill="none" stroke="#4cd04c" stroke-width="1.21"/>
<polygon points="356.5,176.5 385.5,176.5 385.5,208.5 356.5,208.5" fill="none" stroke="#1a1aae" stroke-width="1.43" stroke-dasharray="5 1"/>
<polyline points="355.5,235.6 355.5,254.5 389.5,254.5 389.5,235.6" fill="none" stroke="#4cd04c" stroke-width="1.21"/>
<polygon points="357.5,213.5 391.5,213.5 391.5,235.5 357.5,235.5" fill="none" stroke="#ffffff" stroke-width="1.3"/>
<polygon points="391.5,211.5 401.5,211.5 401.5,236.5 391.5,236.5" fill="none" stroke="#ffffff" stroke-width="1.3"/>
<polygon points="401.5,213.5 411.5,213.5 411.5,235.5 401.5,235.5" fill="none" stroke="#ffffff" stroke-width="1.3"/>
<polygon points="411.5,213.5 437.5,213.5 437.5,223.5 411.5,223.5" fill="none" stroke="#ffffff" stroke-width="1.18"/>
<polygon points="411.5,225.5 437.5,225.5 437.5,235.5 411.5,235.5" fill="none" stroke="#ffffff" stroke-width="1.18"/>
<line x1="411.3" y1="213.8" x2="437.7" y2="223.6" stroke="#ffffff" stroke-width="1.06"/>
<line x1="411.3" y1="223.6" x2="437.7" y2="213.8" stroke="#ffffff" stroke-width="1.06"/>
<line x1="411.3" y1="225.6" x2="437.7" y2="235.4" stroke="#ffffff" stroke-width="1.06"/>
<line x1="411.3" y1="235.4" x2="437.7" y2="225.6" stroke="#ffffff" stroke-width="1.06"/>
<circle cx="389.3" cy="211" r="1" fill="none" stroke="#ffffff" stroke-width="0.94"/>
<circle cx="389.3" cy="237" r="1" fill="none" stroke="#ffffff" stroke-width="0.94"/>
<line x1="375.5" y1="213.8" x2="375.5" y2="235.6" stroke="#4cd04c" stroke-width="0.99"/>
<text x="376.2" y="230.5" font-size="6" fill="#54f654" transform="rotate(-90 376.2 230.5)" textLength="11.5" lengthAdjust="spacingAndGlyphs" font-weight="bold">Φ4H7</text>
<text x="217.6" y="230.5" font-size="6" fill="#54f654" transform="rotate(-90 217.6 230.5)" textLength="10.5" lengthAdjust="spacingAndGlyphs" font-weight="bold">Φ12</text>
<polyline points="284.5,254.3 284.5,265.5 314.5,265.5 314.5,254.3" fill="none" stroke="#ffffff" stroke-width="1.3"/>
<polyline points="273.5,258.3 273.5,261.5 275.2,261.5" fill="none" stroke="#ffffff" stroke-width="0.94"/>
<polyline points="276.8,259.5 278.5,259.5 278.5,262.5 276.5,262.5" fill="none" stroke="#ffffff" stroke-width="0.94"/>
<line x1="160.7" y1="224.5" x2="454.6" y2="224.5" stroke="#a42424" stroke-width="1.38" stroke-dasharray="14 2 2 2"/>
<line x1="299.5" y1="211" x2="299.5" y2="268.8" stroke="#a42424" stroke-width="1.25" stroke-dasharray="10 1.5 1.5 1.5"/>
<line x1="204.5" y1="254.3" x2="204.5" y2="285.5" stroke="#4cd04c" stroke-width="1.1"/>
<line x1="389.5" y1="254.3" x2="389.5" y2="285.5" stroke="#4cd04c" stroke-width="1.1"/>
<line x1="204.5" y1="283.5" x2="389.2" y2="283.5" stroke="#4cd04c" stroke-width="1.1"/>
<polygon points="204.5,283.8 207.7,284.35 207.7,283.25" fill="#4cd04c"/>
<polygon points="389.2,283.8 386,283.25 386,284.35" fill="#4cd04c"/>
<text x="296.5" y="283.6" font-size="8" fill="#54f654" stroke="#54f654" stroke-width="0.2" text-anchor="middle" textLength="10.8" lengthAdjust="spacingAndGlyphs">154</text>
<line x1="386.3" y1="174.5" x2="467" y2="174.5" stroke="#4cd04c" stroke-width="1.1"/>
<line x1="389.2" y1="254.5" x2="467" y2="254.5" stroke="#4cd04c" stroke-width="1.1"/>
<line x1="465.5" y1="174.4" x2="465.5" y2="254.2" stroke="#4cd04c" stroke-width="1.1"/>
<polygon points="465.2,174.4 464.65,177.6 465.75,177.6" fill="#4cd04c"/>
<polygon points="465.2,254.2 465.75,251 464.65,251" fill="#4cd04c"/>
<text x="465" y="213.8" font-size="8" fill="#54f654" stroke="#54f654" stroke-width="0.2" text-anchor="middle" transform="rotate(-90 465 213.8)" textLength="7.2" lengthAdjust="spacingAndGlyphs">67</text>
<line x1="193.2" y1="159.5" x2="200.3" y2="159.5" stroke="#4cd04c" stroke-width="0.99"/>
<line x1="193.2" y1="159.4" x2="190.9" y2="214.3" stroke="#4cd04c" stroke-width="0.99"/>
<text x="195.8" y="158.4" font-size="4.8" fill="#54f654" text-anchor="middle" font-weight="bold">8</text>
<line x1="205.2" y1="159.5" x2="212.3" y2="159.5" stroke="#4cd04c" stroke-width="0.99"/>
<line x1="205.2" y1="159.4" x2="197.8" y2="213.5" stroke="#4cd04c" stroke-width="0.99"/>
<text x="206.9" y="158.4" font-size="4.8" fill="#54f654" text-anchor="middle" font-weight="bold">7</text>
<line x1="218.4" y1="159.5" x2="225" y2="159.5" stroke="#4cd04c" stroke-width="0.99"/>
<line x1="218.4" y1="159.4" x2="203.6" y2="211" stroke="#4cd04c" stroke-width="0.99"/>
<text x="220.9" y="158.4" font-size="4.8" fill="#54f654" text-anchor="middle" font-weight="bold">6</text>
<line x1="240.4" y1="159.5" x2="250.6" y2="159.5" stroke="#4cd04c" stroke-width="0.99"/>
<line x1="240.4" y1="159.4" x2="221.2" y2="222.6" stroke="#4cd04c" stroke-width="0.99"/>
<text x="245.6" y="158.4" font-size="4.8" fill="#54f654" text-anchor="middle" font-weight="bold">7</text>
<line x1="270" y1="159.5" x2="275.8" y2="159.5" stroke="#4cd04c" stroke-width="0.99"/>
<line x1="270" y1="159.2" x2="278.7" y2="178.6" stroke="#4cd04c" stroke-width="0.99"/>
<text x="272.9" y="158.2" font-size="4.8" fill="#54f654" text-anchor="middle" font-weight="bold">5</text>
<line x1="284.5" y1="159.5" x2="290.8" y2="159.5" stroke="#4cd04c" stroke-width="0.99"/>
<line x1="284.5" y1="159.2" x2="282.6" y2="187.8" stroke="#4cd04c" stroke-width="0.99"/>
<text x="286.4" y="158.2" font-size="4.8" fill="#54f654" text-anchor="middle" font-weight="bold">4</text>
<line x1="295.7" y1="159.5" x2="301" y2="159.5" stroke="#4cd04c" stroke-width="0.99"/>
<line x1="295.7" y1="159.2" x2="290.3" y2="180.6" stroke="#4cd04c" stroke-width="0.99"/>
<text x="297.6" y="158.2" font-size="4.8" fill="#54f654" text-anchor="middle" font-weight="bold">3</text>
<line x1="392.3" y1="141.5" x2="401" y2="141.5" stroke="#4cd04c" stroke-width="0.99"/>
<line x1="392.3" y1="141.5" x2="365.3" y2="175.8" stroke="#4cd04c" stroke-width="0.99"/>
<text x="395.4" y="140" font-size="4.8" fill="#54f654" text-anchor="middle" font-weight="bold">9</text>
<line x1="395" y1="158.5" x2="401.6" y2="158.5" stroke="#4cd04c" stroke-width="0.99"/>
<line x1="395" y1="158.4" x2="386.8" y2="174.7" stroke="#4cd04c" stroke-width="0.99"/>
<text x="398.5" y="157.6" font-size="4.8" fill="#54f654" text-anchor="middle" font-weight="bold">2</text>
<line x1="413" y1="159.5" x2="419.8" y2="159.5" stroke="#4cd04c" stroke-width="0.99"/>
<line x1="413" y1="159.2" x2="389" y2="210.8" stroke="#4cd04c" stroke-width="0.99"/>
<text x="416.5" y="158" font-size="4.8" fill="#54f654" text-anchor="middle" font-weight="bold">1</text>
<text x="708.5" y="80" font-size="7" fill="#ffffff" stroke="#ffffff" stroke-width="0.25" textLength="12.5" lengthAdjust="spacingAndGlyphs">A—A</text>
<path clip-path="url(#h19)" d="M655.48 140.71L694.34 179.57M652.65 143.54L691.51 182.4M649.82 146.36L688.69 185.23M647 149.19L685.86 188.05M644.17 152.02L683.03 190.88M641.34 154.85L680.2 193.71M638.51 157.68L677.37 196.54M635.68 160.51L674.54 199.37M632.85 163.34L671.71 202.2M630.03 166.16L668.89 205.02M627.2 168.99L666.06 207.85M624.37 171.82L663.23 210.68M621.54 174.65L660.4 213.51M618.71 177.48L657.57 216.34M615.88 180.31L654.74 219.17M613.05 183.13L651.92 222" stroke="#ffffff" stroke-width="1.1" fill="none"/>
<path clip-path="url(#h20)" d="M634.7 191.21L670.7 155.2M637.52 194.03L673.53 158.03M640.35 196.86L676.36 160.85M643.18 199.69L679.19 163.68M646.01 202.52L682.02 166.51M648.84 205.35L684.85 169.34M651.67 208.18L687.67 172.17M654.49 211L690.5 175M657.32 213.83L693.33 177.82M660.15 216.66L696.16 180.65M662.98 219.49L698.99 183.48M665.81 222.32L701.82 186.31M668.64 225.15L704.64 189.14M671.47 227.97L707.47 191.97M674.29 230.8L710.3 194.8" stroke="#ffffff" stroke-width="1.1" fill="none"/>
<path clip-path="url(#h21)" d="M727.4 173.02L746.18 191.8M724.57 175.85L743.35 194.63M721.74 178.68L740.52 197.46M718.91 181.51L737.69 200.29M716.08 184.34L734.86 203.12M713.25 187.17L732.03 205.95M710.43 189.99L729.21 208.77M707.6 192.82L726.38 211.6" stroke="#ffffff" stroke-width="1.1" fill="none"/>
<path clip-path="url(#h22)" d="M708.58 185.34L746.09 147.83M712.05 188.81L749.56 151.3M715.51 192.27L753.02 154.76M718.98 195.74L756.49 158.23M722.44 199.2L759.95 161.69M725.9 202.67L763.42 165.15M729.37 206.13L766.88 168.62M732.83 209.6L770.35 172.08M736.3 213.06L773.81 175.55M739.76 216.53L777.28 179.01M743.23 219.99L780.74 182.48M746.69 223.46L784.21 185.94M750.16 226.92L787.67 189.41" stroke="#ffffff" stroke-width="1.1" fill="none"/>
<path clip-path="url(#h23)" d="M752.59 182.23L791.42 221.06M749.97 184.85L788.8 223.68M747.35 187.47L786.18 226.3M744.74 190.08L783.57 228.91M742.12 192.7L780.95 231.53M739.5 195.31L778.34 234.15M736.89 197.93L775.72 236.76M734.27 200.55L773.1 239.38M731.66 203.16L770.49 241.99M729.04 205.78L767.87 244.61M726.42 208.4L765.25 247.23M723.81 211.01L762.64 249.84M721.19 213.63L760.02 252.46M718.57 216.25L757.4 255.08M715.96 218.86L754.79 257.69M713.34 221.48L752.17 260.31M710.72 224.09L749.56 262.93" stroke="#ffffff" stroke-width="1.1" fill="none"/>
<path clip-path="url(#h24)" d="M697.43 218.98L729.23 187.18M700.26 221.81L732.06 190.01M703.09 224.64L734.89 192.84M705.92 227.46L737.71 195.67M708.75 230.29L740.54 198.5M711.57 233.12L743.37 201.32M714.4 235.95L746.2 204.15M717.23 238.78L749.03 206.98M720.06 241.61L751.86 209.81M722.89 244.43L754.68 212.64M725.72 247.26L757.51 215.47M728.54 250.09L760.34 218.29M731.37 252.92L763.17 221.12" stroke="#ffffff" stroke-width="1.1" fill="none"/>
<path clip-path="url(#h25)" d="M706.44 220.15L718.75 207.84M707.71 221.43L720.03 209.11M708.98 222.7L721.3 210.38M710.26 223.97L722.57 211.66M711.53 225.25L723.85 212.93M712.8 226.52L725.12 214.2M714.08 227.79L726.39 215.48M715.35 229.06L727.66 216.75M716.62 230.34L728.94 218.02M717.89 231.61L730.21 219.29M719.17 232.88L731.48 220.57M720.44 234.15L732.75 221.84" stroke="#ffffff" stroke-width="0.8" fill="none"/>
<path clip-path="url(#h26)" d="M788.47 207.65L810.15 229.33M785.85 210.27L807.53 231.95M783.24 212.89L804.91 234.56M780.62 215.5L802.3 237.18M778.01 218.12L799.68 239.79M775.39 220.73L797.07 242.41M772.77 223.35L794.45 245.03M770.16 225.97L791.83 247.64M767.54 228.58L789.22 250.26M764.92 231.2L786.6 252.88" stroke="#ffffff" stroke-width="1.1" fill="none"/>
<path clip-path="url(#h27)" d="M746.96 248.65L763.35 232.26M749.79 251.48L766.18 235.09M752.62 254.3L769 237.92M755.44 257.13L771.83 240.74M758.27 259.96L774.66 243.57M761.1 262.79L777.49 246.4M763.93 265.62L780.32 249.23M766.76 268.45L783.15 252.06" stroke="#ffffff" stroke-width="1.1" fill="none"/>
<path clip-path="url(#h28)" d="M765.17 247.41L781.66 230.92M767.99 250.24L784.49 233.74M770.82 253.07L787.32 236.57M773.65 255.9L790.15 239.4M776.48 258.72L792.97 242.23M779.31 261.55L795.8 245.06M782.14 264.38L798.63 247.89M784.96 267.21L801.46 250.71" stroke="#ffffff" stroke-width="1.1" fill="none"/>
<polyline points="646.5,158 646.5,107.5 660.5,107.5 660.5,172.7" fill="none" stroke="#ffffff" stroke-width="1.3"/>
<line x1="646.4" y1="123.5" x2="660.6" y2="123.5" stroke="#ffffff" stroke-width="1.18"/>
<path d="M645.6 157.6 Q648 167 660.6 172.7" fill="none" stroke="#ffffff" stroke-width="1.18"/>
<polyline points="645.5,157.6 645.5,206.5 660.6,206.5 664,213.5 673,213.5" fill="none" stroke="#ffffff" stroke-width="1.3"/>
<polyline points="667.53,173.31 670.53,174.08 673.39,175.3 676.03,176.95 678.38,178.97 680.4,181.34 682.03,183.98 683.24,186.84 684.01,189.85 684.3,192.95 684.11,196.05 683.46,199.08 682.35,201.99 680.81,204.68 678.87,207.12 676.59,209.22 674.01,210.96 671.2,212.28 668.22,213.16" fill="none" stroke="#ffffff" stroke-width="1.3"/>
<line x1="660.5" y1="172.7" x2="660.5" y2="206.3" stroke="#ffffff" stroke-width="1.06"/>
<polygon points="647.5,186.5 652.5,186.5 652.5,200.5 647.5,200.5" fill="none" stroke="#ffffff" stroke-width="1.18"/>
<polygon points="652.5,189.5 676.5,189.5 676.5,196.5 652.5,196.5" fill="none" stroke="#ffffff" stroke-width="1.18"/>
<line x1="644" y1="193.5" x2="680" y2="193.5" stroke="#a42424" stroke-width="1.25" stroke-dasharray="7 2"/>
<polyline points="669.5,170.4 669.5,167.5 765.5,167.5 765.5,170.4" fill="none" stroke="#ffffff" stroke-width="1.3"/>
<line x1="664.7" y1="170.5" x2="771.7" y2="170.5" stroke="#ffffff" stroke-width="1.3"/>
<polyline points="771.5,170.4 771.5,213.5 765.8,213.5" fill="none" stroke="#ffffff" stroke-width="1.3"/>
<line x1="688.5" y1="170.4" x2="688.5" y2="181.6" stroke="#ffffff" stroke-width="1.18"/>
<line x1="682.6" y1="181.5" x2="723.8" y2="181.5" stroke="#ffffff" stroke-width="1.18"/>
<line x1="684.6" y1="202.5" x2="717" y2="202.5" stroke="#ffffff" stroke-width="1.3"/>
<line x1="723.5" y1="181.6" x2="723.5" y2="203.4" stroke="#ffffff" stroke-width="1.18"/>
<line x1="717.6" y1="197.5" x2="723.8" y2="197.5" stroke="#ffffff" stroke-width="1.18"/>
<line x1="717.5" y1="181.6" x2="717.5" y2="203.4" stroke="#ffffff" stroke-width="1.06"/>
<line x1="729.5" y1="170.4" x2="729.5" y2="203.5" stroke="#ffffff" stroke-width="1.18"/>
<line x1="765.5" y1="170.4" x2="765.5" y2="223" stroke="#ffffff" stroke-width="1.18"/>
<line x1="723.8" y1="203.5" x2="766.5" y2="203.5" stroke="#ffffff" stroke-width="1.3"/>
<line x1="734.5" y1="170.4" x2="734.5" y2="179.6" stroke="#ffffff" stroke-width="1.18"/>
<line x1="729.6" y1="179.5" x2="734.2" y2="179.5" stroke="#ffffff" stroke-width="1.18"/>
<polyline points="734.5,203.5 734.5,227.5 744.5,227.5 744.5,250.2" fill="none" stroke="#ffffff" stroke-width="1.3"/>
<line x1="732.5" y1="203.5" x2="732.5" y2="227.3" stroke="#ffffff" stroke-width="1.06"/>
<polyline points="765.8,223.5 768.5,223.5 768.5,241.4" fill="none" stroke="#ffffff" stroke-width="1.18"/>
<line x1="744.6" y1="241.5" x2="801.4" y2="241.5" stroke="#ffffff" stroke-width="1.3"/>
<polyline points="717.3,235.5 742.5,235.5 742.5,227.3" fill="none" stroke="#ffffff" stroke-width="1.3"/>
<circle cx="716.2" cy="220.6" r="14.3" fill="none" stroke="#ffffff" stroke-width="1.3"/>
<circle cx="716.2" cy="220.6" r="10" fill="none" stroke="#ffffff" stroke-width="1.18"/>
<polygon points="722.5,220.6 719.35,226.5 713.05,226.5 709.9,220.6 713.05,215.5 719.35,215.5 722.5,220.6" fill="none" stroke="#ffffff" stroke-width="1.18"/>
<line x1="702.6" y1="220.5" x2="738.8" y2="220.5" stroke="#a42424" stroke-width="1.25" stroke-dasharray="9 2"/>
<polyline points="783.5,241.4 783.5,219.5 819.5,219.5 819.5,250.2" fill="none" stroke="#ffffff" stroke-width="1.3"/>
<line x1="794.5" y1="219.4" x2="794.5" y2="241.4" stroke="#ffffff" stroke-width="1.18"/>
<polygon points="768.5,224.5 779.5,224.5 779.5,253.5 768.5,253.5" fill="none" stroke="#ffffff" stroke-width="1.18"/>
<line x1="770.5" y1="226.5" x2="770.5" y2="253" stroke="#ffffff" stroke-width="1.06"/>
<line x1="778.5" y1="226.5" x2="778.5" y2="253" stroke="#ffffff" stroke-width="1.06"/>
<line x1="768.6" y1="226.5" x2="779.7" y2="226.5" stroke="#ffffff" stroke-width="1.06" stroke-dasharray="2.2 1"/>
<polyline points="759.5,241.4 759.5,262.5 788.5,262.5 788.5,241.4" fill="none" stroke="#ffffff" stroke-width="1.3"/>
<polyline points="764.5,254.5 764.5,260.5 771.5,260.5 771.5,257.5 775.5,257.5 775.5,260.5 783.5,260.5 783.5,254.5" fill="none" stroke="#ffffff" stroke-width="1.18"/>
<line x1="773.5" y1="219.7" x2="773.5" y2="265.8" stroke="#a42424" stroke-width="1.25" stroke-dasharray="8 1.5 1.5 1.5"/>
<polyline points="615.5,250.2 615.5,219.5 651.5,219.5 651.5,223.5 671.5,223.5 671.5,250.2" fill="none" stroke="#ffffff" stroke-width="1.3"/>
<line x1="615.6" y1="223.5" x2="651.7" y2="223.5" stroke="#ffffff" stroke-width="1.18"/>
<polyline points="669.5,213.2 669.5,223" fill="none" stroke="#ffffff" stroke-width="1.18"/>
<polyline points="645.5,250.2 645.5,262.5 675.5,262.5 675.5,250.2" fill="none" stroke="#ffffff" stroke-width="1.3"/>
<line x1="583.4" y1="250.5" x2="615.6" y2="250.5" stroke="#4cd04c" stroke-width="1.1"/>
<line x1="615.6" y1="250.5" x2="820.2" y2="250.5" stroke="#ffffff" stroke-width="1.3"/>
<line x1="633.5" y1="212.1" x2="633.5" y2="256.8" stroke="#a42424" stroke-width="1.25" stroke-dasharray="8 2"/>
<line x1="661.5" y1="216.6" x2="661.5" y2="265.7" stroke="#a42424" stroke-width="1.25" stroke-dasharray="8 2"/>
<line x1="717.5" y1="168" x2="717.5" y2="257.4" stroke="#a42424" stroke-width="1.25"/>
<line x1="801.5" y1="212.1" x2="801.5" y2="257.4" stroke="#a42424" stroke-width="1.25" stroke-dasharray="8 2"/>
<line x1="693.5" y1="107.5" x2="783.7" y2="107.5" stroke="#58dcec" stroke-width="1.1" stroke-dasharray="12 1.3 1.6 1.3 1.6 1.3"/>
<line x1="693.5" y1="107.2" x2="693.5" y2="202.6" stroke="#58dcec" stroke-width="1.1" stroke-dasharray="12 1.3 1.6 1.3 1.6 1.3"/>
<line x1="783.5" y1="107.2" x2="783.5" y2="148" stroke="#58dcec" stroke-width="1.1" stroke-dasharray="12 1.3 1.6 1.3 1.6 1.3"/>
<line x1="747.3" y1="149.5" x2="783.7" y2="149.5" stroke="#58dcec" stroke-width="1.1" stroke-dasharray="12 1.3 1.6 1.3 1.6 1.3"/>
<line x1="747.5" y1="149.2" x2="747.5" y2="202.5" stroke="#58dcec" stroke-width="1.1" stroke-dasharray="12 1.3 1.6 1.3 1.6 1.3"/>
<line x1="780.4" y1="149.2" x2="747.3" y2="202.5" stroke="#58dcec" stroke-width="1.1" stroke-dasharray="12 1.3 1.6 1.3 1.6 1.3"/>
<line x1="693.5" y1="97.7" x2="693.5" y2="125" stroke="#4cd04c" stroke-width="1.1"/>
<line x1="783.5" y1="97.7" x2="783.5" y2="125" stroke="#4cd04c" stroke-width="1.1"/>
<line x1="693.5" y1="99.5" x2="783.7" y2="99.5" stroke="#4cd04c" stroke-width="1.1"/>
<polygon points="693.5,99.2 696.7,99.75 696.7,98.65" fill="#4cd04c"/>
<polygon points="783.7,99.2 780.5,98.65 780.5,99.75" fill="#4cd04c"/>
<text x="739.6" y="99" font-size="8" fill="#54f654" stroke="#54f654" stroke-width="0.2" text-anchor="middle" textLength="7.2" lengthAdjust="spacingAndGlyphs">75</text>
<text x="706.8" y="165.3" font-size="5.5" fill="#54f654" textLength="12" lengthAdjust="spacingAndGlyphs" font-weight="bold">Φ28</text>
<line x1="705.4" y1="166.5" x2="730" y2="166.5" stroke="#4cd04c" stroke-width="1.1"/>
<line x1="730.5" y1="166.5" x2="730.5" y2="179" stroke="#4cd04c" stroke-width="1.1"/>
<line x1="583.4" y1="107.5" x2="646.4" y2="107.5" stroke="#4cd04c" stroke-width="1.1"/>
<line x1="584.5" y1="107.1" x2="584.5" y2="250.2" stroke="#4cd04c" stroke-width="1.1"/>
<polygon points="584.8,107.1 584.25,110.3 585.35,110.3" fill="#4cd04c"/>
<polygon points="584.8,250.2 585.35,247 584.25,247" fill="#4cd04c"/>
<text x="584.6" y="178.6" font-size="8" fill="#54f654" stroke="#54f654" stroke-width="0.2" text-anchor="middle" transform="rotate(-90 584.6 178.6)" textLength="10.8" lengthAdjust="spacingAndGlyphs">118</text>
<line x1="603.7" y1="193.5" x2="645" y2="193.5" stroke="#4cd04c" stroke-width="1.1"/>
<line x1="604.5" y1="193.3" x2="604.5" y2="250.2" stroke="#4cd04c" stroke-width="1.1"/>
<polygon points="604.5,193.3 603.95,196.5 605.05,196.5" fill="#4cd04c"/>
<polygon points="604.5,250.2 605.05,247 603.95,247" fill="#4cd04c"/>
<text x="604.3" y="222" font-size="8" fill="#54f654" stroke="#54f654" stroke-width="0.2" text-anchor="middle" transform="rotate(-90 604.3 222)" textLength="7.2" lengthAdjust="spacingAndGlyphs">47</text>
<line x1="695" y1="220.5" x2="702.6" y2="220.5" stroke="#4cd04c" stroke-width="1.1"/>
<line x1="696.5" y1="220.4" x2="696.5" y2="250.2" stroke="#4cd04c" stroke-width="1.1"/>
<polygon points="696.4,220.4 695.85,223.6 696.95,223.6" fill="#4cd04c"/>
<polygon points="696.4,250.2 696.95,247 695.85,247" fill="#4cd04c"/>
<text x="696.2" y="234" font-size="8" fill="#54f654" stroke="#54f654" stroke-width="0.2" text-anchor="middle" transform="rotate(-90 696.2 234)" textLength="7.2" lengthAdjust="spacingAndGlyphs">35</text>
<line x1="661.5" y1="265.7" x2="661.5" y2="276.5" stroke="#4cd04c" stroke-width="1.1"/>
<line x1="717.5" y1="257.4" x2="717.5" y2="276.5" stroke="#4cd04c" stroke-width="1.1"/>
<line x1="801.5" y1="257.4" x2="801.5" y2="276.5" stroke="#4cd04c" stroke-width="1.1"/>
<line x1="661" y1="275.5" x2="717.3" y2="275.5" stroke="#4cd04c" stroke-width="1.1"/>
<polygon points="661,275.1 664.2,275.65 664.2,274.55" fill="#4cd04c"/>
<polygon points="717.3,275.1 714.1,274.55 714.1,275.65" fill="#4cd04c"/>
<text x="690" y="274.9" font-size="8" fill="#54f654" stroke="#54f654" stroke-width="0.2" text-anchor="middle" textLength="7.2" lengthAdjust="spacingAndGlyphs">47</text>
<line x1="717.3" y1="275.5" x2="801.5" y2="275.5" stroke="#4cd04c" stroke-width="1.1"/>
<polygon points="717.3,275.1 720.5,275.65 720.5,274.55" fill="#4cd04c"/>
<polygon points="801.5,275.1 798.3,274.55 798.3,275.65" fill="#4cd04c"/>
<text x="760" y="274.9" font-size="8" fill="#54f654" stroke="#54f654" stroke-width="0.2" text-anchor="middle" textLength="7.2" lengthAdjust="spacingAndGlyphs">70</text>
<line x1="615.5" y1="250.2" x2="615.5" y2="295.4" stroke="#4cd04c" stroke-width="1.1"/>
<line x1="819.5" y1="250.2" x2="819.5" y2="295.4" stroke="#4cd04c" stroke-width="1.1"/>
<line x1="615.8" y1="294.5" x2="819.7" y2="294.5" stroke="#4cd04c" stroke-width="1.1"/>
<polygon points="615.8,294 619,294.55 619,293.45" fill="#4cd04c"/>
<polygon points="819.7,294 816.5,293.45 816.5,294.55" fill="#4cd04c"/>
<text x="718.5" y="293.8" font-size="8" fill="#54f654" stroke="#54f654" stroke-width="0.2" text-anchor="middle" textLength="10.8" lengthAdjust="spacingAndGlyphs">170</text>
<line x1="616.2" y1="152.5" x2="628.7" y2="152.5" stroke="#4cd04c" stroke-width="0.99"/>
<line x1="628.7" y1="152.7" x2="649.8" y2="190.8" stroke="#4cd04c" stroke-width="0.99"/>
<text x="622" y="151.3" font-size="4.8" fill="#54f654" text-anchor="middle" font-weight="bold">14</text>
<line x1="811.5" y1="152.5" x2="830" y2="152.5" stroke="#4cd04c" stroke-width="0.99"/>
<line x1="811.5" y1="152.1" x2="779" y2="256" stroke="#4cd04c" stroke-width="0.99"/>
<text x="821.7" y="150.6" font-size="4.8" fill="#54f654" text-anchor="middle" font-weight="bold">15</text>
<line x1="208" y1="448.5" x2="349" y2="448.5" stroke="#161694" stroke-width="2.75"/>
<line x1="208" y1="539.5" x2="349" y2="539.5" stroke="#161694" stroke-width="2.75"/>
<line x1="229.5" y1="466.5" x2="335.4" y2="466.5" stroke="#1a1aae" stroke-width="1.65" stroke-dasharray="9 1.3"/>
<line x1="335.4" y1="466.5" x2="349.5" y2="466.5" stroke="#1a1aae" stroke-width="1.65"/>
<line x1="335.5" y1="466.5" x2="335.5" y2="476.3" stroke="#1a1aae" stroke-width="1.65"/>
<line x1="226" y1="476.5" x2="335.4" y2="476.5" stroke="#1a1aae" stroke-width="1.65" stroke-dasharray="9 1.3"/>
<line x1="229.5" y1="520.5" x2="335.4" y2="520.5" stroke="#1a1aae" stroke-width="1.65" stroke-dasharray="9 1.3"/>
<line x1="335.4" y1="520.5" x2="349.5" y2="520.5" stroke="#1a1aae" stroke-width="1.65"/>
<line x1="335.5" y1="520.8" x2="335.5" y2="510.8" stroke="#1a1aae" stroke-width="1.65"/>
<line x1="226" y1="510.5" x2="335.4" y2="510.5" stroke="#1a1aae" stroke-width="1.65" stroke-dasharray="9 1.3"/>
<polygon points="229.5,482.5 345.5,482.5 345.5,504.5 229.5,504.5" fill="none" stroke="#1a1aae" stroke-width="1.65"/>
<line x1="229" y1="485.5" x2="345.8" y2="485.5" stroke="#1a1aae" stroke-width="1.54" stroke-dasharray="9 1.3"/>
<line x1="229" y1="501.5" x2="345.8" y2="501.5" stroke="#1a1aae" stroke-width="1.54" stroke-dasharray="9 1.3"/>
<polyline points="245.5,392.5 278.3,392.5" fill="none" stroke="#ffffff" stroke-width="1.3"/>
<polyline points="314.4,392.5 347.9,392.5 386.7,449.5" fill="none" stroke="#ffffff" stroke-width="1.3"/>
<polyline points="245.5,392.5 206.9,445.8" fill="none" stroke="#ffffff" stroke-width="1.3"/>
<polyline points="208.1,541.3 245.5,595.5 278.6,595.5" fill="none" stroke="#ffffff" stroke-width="1.3"/>
<polyline points="314.2,595.5 347.9,595.5 386.3,538.1" fill="none" stroke="#ffffff" stroke-width="1.3"/>
<polyline points="278.5,392.3 278.5,410.5 281.3,418.7 289.9,426.9 296.4,428.6 304,426.9 312.9,418.7 314.5,410.5 314.5,392.3" fill="none" stroke="#ffffff" stroke-width="1.3"/>
<polyline points="289.5,392.3 289.5,410.5 290.6,413.5 295,417.5 298.5,417.5 304,413.8 304.5,410.5 304.5,392.3" fill="none" stroke="#ffffff" stroke-width="1.3"/>
<line x1="289.5" y1="392.5" x2="278.2" y2="392.5" stroke="#ffffff" stroke-width="1.3"/>
<line x1="304.6" y1="392.5" x2="314.6" y2="392.5" stroke="#ffffff" stroke-width="1.3"/>
<path d="M278.6 595.1 L278.6 577.2 A17.9 17.9 0 0 1 314.4 577.2 L314.4 595.1" fill="none" stroke="#ffffff" stroke-width="1.3"/>
<path d="M288.8 595.1 L288.8 577.2 A7.9 7.9 0 0 1 304.6 577.2 L304.6 595.1" fill="none" stroke="#ffffff" stroke-width="1.3"/>
<line x1="278.6" y1="595.5" x2="288.8" y2="595.5" stroke="#ffffff" stroke-width="1.3"/>
<line x1="304.6" y1="595.5" x2="314.4" y2="595.5" stroke="#ffffff" stroke-width="1.3"/>
<path d="M208.6 445.4 L271.5 445.4 L271.5 439.2 L300 439.2 L300 445.4 L349.3 445.4" fill="none" stroke="#ffffff" stroke-width="1.3"/>
<path d="M208.6 541.4 L271.5 541.4 L271.5 547.3 L300 547.3 L300 541.4 L349.3 541.4" fill="none" stroke="#ffffff" stroke-width="1.3"/>
<path d="M208.6 445.4 Q201.8 447 201.8 457 L201.8 530 Q201.8 540 208.6 541.4" fill="none" stroke="#ffffff" stroke-width="1.3"/>
<line x1="349.5" y1="445.4" x2="349.5" y2="541.4" stroke="#ffffff" stroke-width="1.18"/>
<line x1="291.5" y1="439.2" x2="291.5" y2="547.3" stroke="#ffffff" stroke-width="1.18"/>
<line x1="302.5" y1="445.4" x2="302.5" y2="541.4" stroke="#ffffff" stroke-width="1.18"/>
<line x1="300.5" y1="445.4" x2="300.5" y2="541.4" stroke="#ffffff" stroke-width="1.18"/>
<path d="M217 466.4 L229.8 466.4 M217 521.6 L229.8 521.6 M215.4 468 L215.4 520 M215.4 468 Q215.4 466.4 217 466.4 M215.4 520 Q215.4 521.6 217 521.6" fill="none" stroke="#ffffff" stroke-width="1.18"/>
<line x1="215.4" y1="486.5" x2="222.3" y2="486.5" stroke="#ffffff" stroke-width="1.18"/>
<line x1="215.4" y1="501.5" x2="222.3" y2="501.5" stroke="#ffffff" stroke-width="1.18"/>
<polyline points="271.3,447.4 271.21,447.41 267.44,447.3 263.67,447.5 259.93,448.01 256.25,448.83 252.64,449.94 249.14,451.34 245.77,453.03 242.54,454.99 239.49,457.2 236.63,459.66 233.98,462.34 231.55,465.23 229.38,468.31 227.46,471.56 225.82,474.96 224.45,478.48 223.39,482.09 222.62,485.79 222.15,489.53 222,493.3 222.15,497.07 222.62,500.81 223.39,504.51 224.45,508.12 225.82,511.64 227.46,515.04 229.38,518.29 231.55,521.37 233.98,524.26 236.63,526.94 239.49,529.4 242.54,531.61 245.77,533.57 249.14,535.26 252.64,536.66 256.25,537.77 259.93,538.59 263.67,539.1 267.44,539.3 271.21,539.19 271.3,539.2" fill="none" stroke="#ffffff" stroke-width="1.18"/>
<path d="M271.3 445.4 L271.3 461.5 Q271.3 464 267.5 464.9 Q258.5 466.5 249.5 471.2 Q241.2 477 241.1 493.3 Q241.2 509.5 249.5 515.4 Q258.5 520.2 267.5 521.8 Q271.3 522.6 271.3 525 L271.3 541.4" fill="none" stroke="#ffffff" stroke-width="1.18"/>
<circle cx="270.2" cy="493.3" r="16.7" fill="none" stroke="#ffffff" stroke-width="1.42"/>
<circle cx="270.2" cy="493.3" r="14.4" fill="none" stroke="#ffffff" stroke-width="1.06" stroke-dasharray="5 2"/>
<polygon points="257.5,491.5 261.5,491.5 261.5,495.5 257.5,495.5" fill="none" stroke="#a42424" stroke-width="1.12"/>
<polygon points="278.5,491.5 282.5,491.5 282.5,495.5 278.5,495.5" fill="none" stroke="#a42424" stroke-width="1.12"/>
<path d="M187.5 486.4 L183.6 486.4 Q182.2 486.4 182.2 488 L182.2 499.7 Q182.2 501.3 183.6 501.3 L187.5 501.3" fill="none" stroke="#ffffff" stroke-width="1.18"/>
<path d="M199 480.2 L190 480.2 Q187.5 480.2 187.5 483 L187.5 504.8 Q187.5 507.6 190 507.6 L199 507.6" fill="none" stroke="#ffffff" stroke-width="1.3"/>
<line x1="191.5" y1="480.2" x2="191.5" y2="507.6" stroke="#ffffff" stroke-width="1.18"/>
<polyline points="199.5,480.2 199.5,478.5 201.4,478.5" fill="none" stroke="#ffffff" stroke-width="1.18"/>
<polyline points="199.5,507.6 199.5,509.5 201.4,509.5" fill="none" stroke="#ffffff" stroke-width="1.18"/>
<line x1="199.5" y1="480.2" x2="199.5" y2="507.6" stroke="#ffffff" stroke-width="1.18"/>
<circle cx="193.6" cy="493.7" r="1.3" fill="none" stroke="#f0c0c0" stroke-width="0.99"/>
<path d="M302.5 455 Q302.5 451.8 305.5 451.8 L347.5 451.8 Q350.5 451.8 350.5 455 L350.5 531 Q350.5 534.2 347.5 534.2 L305.5 534.2 Q302.5 534.2 302.5 531 Z" fill="none" stroke="#58dcec" stroke-width="1.21"/>
<line x1="307" y1="451.5" x2="346" y2="451.5" stroke="#58dcec" stroke-width="1.21"/>
<path d="M302.5 483.5 Q304 501 320.8 507.7 L320.8 534.2 M350.5 487 Q348 503 332.9 507.7 L332.9 534.2" fill="none" stroke="#58dcec" stroke-width="1.21"/>
<polygon points="351.5,445.5 381,445.5 387.5,452.5 387.5,534 381,540.5 351.5,540.5" fill="none" stroke="#ffffff" stroke-width="1.3"/>
<line x1="361.5" y1="445.3" x2="361.5" y2="540.9" stroke="#ffffff" stroke-width="1.18"/>
<polygon points="357.5,428.5 380.5,428.5 380.5,441.5 357.5,441.5" fill="none" stroke="#ffffff" stroke-width="1.3"/>
<polyline points="354.5,445.3 354.5,441.5 383.5,441.5 383.5,445.3" fill="none" stroke="#ffffff" stroke-width="1.18"/>
<circle cx="361.6" cy="435.1" r="2.7" fill="none" stroke="#4cd04c" stroke-width="1.32"/>
<line x1="361.5" y1="429.5" x2="361.5" y2="444" stroke="#a42424" stroke-width="1.12"/>
<line x1="356.5" y1="435.5" x2="366.5" y2="435.5" stroke="#a42424" stroke-width="1.12"/>
<circle cx="374" cy="435.1" r="4.1" fill="none" stroke="#ffffff" stroke-width="1.18"/>
<line x1="370.8" y1="438.6" x2="376.6" y2="431.4" stroke="#a42424" stroke-width="1.25"/>
<line x1="372" y1="439.6" x2="377.8" y2="432.4" stroke="#a42424" stroke-width="1.25"/>
<line x1="369" y1="435.5" x2="379.5" y2="435.5" stroke="#a42424" stroke-width="1" stroke-dasharray="3 1.5"/>
<line x1="374.5" y1="429.5" x2="374.5" y2="441" stroke="#a42424" stroke-width="1"/>
<path clip-path="url(#h29)" d="M357.44 467.75L378.7 489.01M356.02 469.16L377.29 490.43M354.61 470.58L375.87 491.84M353.2 471.99L374.46 493.25M351.78 473.4L373.05 494.67M350.37 474.82L371.63 496.08M348.95 476.23L370.22 497.5M347.54 477.65L368.8 498.91M346.13 479.06L367.39 500.32M344.71 480.48L365.97 501.74M343.3 481.89L364.56 503.15M341.88 483.3L363.15 504.57M340.47 484.72L361.73 505.98M339.05 486.13L360.32 507.4M337.64 487.55L358.9 508.81M336.23 488.96L357.49 510.22M334.81 490.37L356.08 511.64M378.52 489.81L357.26 511.07M377.11 488.39L355.84 509.66M375.69 486.98L354.43 508.24M374.28 485.56L353.01 506.83M372.86 484.15L351.6 505.41M371.45 482.74L350.19 504M370.04 481.32L348.77 502.59M368.62 479.91L347.36 501.17M367.21 478.49L345.94 499.76M365.79 477.08L344.53 498.34M364.38 475.66L343.11 496.93M362.96 474.25L341.7 495.51M361.55 472.84L340.29 494.1M360.14 471.42L338.87 492.69M358.72 470.01L337.46 491.27M357.31 468.59L336.04 489.86M355.89 467.18L334.63 488.44" stroke="#ffffff" stroke-width="0.8" fill="none"/>
<path clip-path="url(#h30)" d="M344.6 487.24L371.29 460.55M347.01 489.64L373.69 462.96M349.41 492.04L376.09 465.36M351.82 494.45L378.5 467.77M354.22 496.85L380.9 470.17M356.63 499.26L383.31 472.58M359.03 501.66L385.71 474.98M361.43 504.06L388.11 477.38M363.84 506.47L390.52 479.79M366.24 508.87L392.92 482.19M368.65 511.28L395.33 484.6M371.05 513.68L397.73 487M373.45 516.09L400.14 489.4M375.86 518.49L402.54 491.81" stroke="#ffffff" stroke-width="0.9" fill="none"/>
<polygon points="352.5,477.5 379.3,477.5 385.5,485 385.5,494 379.3,501.5 352.5,501.5" fill="none" stroke="#ffffff" stroke-width="1.3"/>
<polygon points="356.5,486.5 377.5,486.5 377.5,493.5 356.5,493.5" fill="none" stroke="#ffffff" stroke-width="1.18"/>
<line x1="371.5" y1="486.3" x2="371.5" y2="493.3" stroke="#ffffff" stroke-width="1.06"/>
<line x1="346.8" y1="489.5" x2="392.9" y2="489.5" stroke="#a42424" stroke-width="1.25" stroke-dasharray="8 2"/>
<polygon points="389.5,479.5 398.5,479.5 398.5,507.5 389.5,507.5" fill="none" stroke="#ffffff" stroke-width="1.3"/>
<polygon points="398.5,482.5 408.5,482.5 408.5,504.5 398.5,504.5" fill="none" stroke="#ffffff" stroke-width="1.3"/>
<polygon points="408.5,482.5 436.5,482.5 436.5,492.5 408.5,492.5" fill="none" stroke="#ffffff" stroke-width="1.18"/>
<polygon points="408.5,495.5 436.5,495.5 436.5,504.5 408.5,504.5" fill="none" stroke="#ffffff" stroke-width="1.18"/>
<line x1="408" y1="482" x2="436" y2="492" stroke="#ffffff" stroke-width="1.06"/>
<line x1="408" y1="492" x2="436" y2="482" stroke="#ffffff" stroke-width="1.06"/>
<line x1="408" y1="495" x2="436" y2="504.6" stroke="#ffffff" stroke-width="1.06"/>
<line x1="408" y1="504.6" x2="436" y2="495" stroke="#ffffff" stroke-width="1.06"/>
<line x1="136.6" y1="493.5" x2="450.9" y2="493.5" stroke="#a42424" stroke-width="1.38" stroke-dasharray="14 2 2 2"/>
<line x1="296.5" y1="365" x2="296.5" y2="617" stroke="#a42424" stroke-width="1.38" stroke-dasharray="14 2 2 2"/>
<line x1="265" y1="410.5" x2="328.1" y2="410.5" stroke="#a42424" stroke-width="1.25"/>
<line x1="274.3" y1="577.5" x2="319.5" y2="577.5" stroke="#a42424" stroke-width="1.25"/>
<line x1="288.3" y1="549.5" x2="305" y2="549.5" stroke="#a42424" stroke-width="1.12"/>
<path clip-path="url(#h31)" d="M457.15 501.33L473.5 470.58M459.8 502.74L476.15 471.99M462.45 504.15L478.8 473.39M465.1 505.56L481.45 474.8M467.75 506.96L484.1 476.21M470.39 508.37L486.75 477.62M473.04 509.78L489.4 479.03M475.69 511.19L492.04 480.44M478.34 512.6L494.69 481.84M480.99 514.01L497.34 483.25M483.64 515.41L499.99 484.66M486.29 516.82L502.64 486.07M488.94 518.23L505.29 487.48" stroke="#ffffff" stroke-width="0.9" fill="none"/>
<circle cx="481.4" cy="494.5" r="10.9" fill="none" stroke="#ffffff" stroke-width="1.3"/>
<line x1="460.4" y1="494.5" x2="504" y2="494.5" stroke="#a42424" stroke-width="1.38"/>
<line x1="481.5" y1="472.2" x2="481.5" y2="524.8" stroke="#a42424" stroke-width="1.38"/>
<polyline points="481.4,483.4 487.6,477.2" fill="none" stroke="#4cd04c" stroke-width="0.99"/>
<polyline points="493.8,494.5 499.6,488.9" fill="none" stroke="#4cd04c" stroke-width="0.99"/>
<line x1="487" y1="477.8" x2="499" y2="489.5" stroke="#4cd04c" stroke-width="0.99"/>
<text x="493.5" y="482.2" font-size="5.5" fill="#54f654" text-anchor="middle" transform="rotate(45 493.5 482.2)" font-weight="bold">14</text>
<polyline points="493.8,494.5 505.4,507.2" fill="none" stroke="#4cd04c" stroke-width="0.99"/>
<polyline points="481.4,505.6 493.6,518.9" fill="none" stroke="#4cd04c" stroke-width="0.99"/>
<line x1="504.8" y1="506.6" x2="493" y2="518.3" stroke="#4cd04c" stroke-width="0.99"/>
<text x="496.8" y="511" font-size="5.5" fill="#54f654" text-anchor="middle" transform="rotate(-45 496.8 511)" font-weight="bold">14</text>
<line x1="332.2" y1="419.5" x2="340.1" y2="419.5" stroke="#4cd04c" stroke-width="0.99"/>
<line x1="338.8" y1="419.3" x2="335.5" y2="458.2" stroke="#4cd04c" stroke-width="0.99"/>
<text x="336.2" y="418" font-size="4.8" fill="#54f654" text-anchor="middle" font-weight="bold">13</text>
<line x1="375.7" y1="418.5" x2="386.7" y2="418.5" stroke="#4cd04c" stroke-width="0.99"/>
<line x1="375.7" y1="418" x2="371.3" y2="429.7" stroke="#4cd04c" stroke-width="0.99"/>
<text x="381.2" y="416.7" font-size="4.8" fill="#54f654" text-anchor="middle" font-weight="bold">10</text>
<line x1="401" y1="417.5" x2="413.1" y2="417.5" stroke="#4cd04c" stroke-width="0.99"/>
<line x1="401" y1="417.6" x2="364.7" y2="487.9" stroke="#4cd04c" stroke-width="0.99"/>
<text x="406.5" y="416.2" font-size="4.8" fill="#54f654" text-anchor="middle" font-weight="bold">9</text>
<text x="603.5" y="525" font-size="5.6" fill="#ffffff" stroke="#ffffff" stroke-width="0.3" textLength="22.4" lengthAdjust="spacingAndGlyphs" font-weight="bold">技术要求</text>
<text x="572.2" y="534" font-size="5.6" fill="#ffffff" stroke="#ffffff" stroke-width="0.3" textLength="77.4" lengthAdjust="spacingAndGlyphs" font-weight="bold">1.先将工件装夹于活动钳身右侧固定</text>
<text x="572.2" y="542.8" font-size="5.6" fill="#ffffff" stroke="#ffffff" stroke-width="0.3" textLength="77.4" lengthAdjust="spacingAndGlyphs" font-weight="bold">2.工件的夹紧靠丝杠带动活动钳身</text>
<text x="572.9" y="553.2" font-size="5.6" fill="#ffffff" stroke="#ffffff" stroke-width="0.3" textLength="99" lengthAdjust="spacingAndGlyphs" font-weight="bold">3.装配后螺杆应转动。钳口不得有冲击和卡滞</text>
<text x="572.9" y="561.4" font-size="5.6" fill="#ffffff" stroke="#ffffff" stroke-width="0.3" textLength="16.3" lengthAdjust="spacingAndGlyphs" font-weight="bold">住现象</text>
<text x="572.9" y="570" font-size="5.6" fill="#ffffff" stroke="#ffffff" stroke-width="0.3" textLength="99" lengthAdjust="spacingAndGlyphs" font-weight="bold">4.加工件夹紧时钳口面与工作台无自由摆晃</text>
<text x="572.9" y="577.8" font-size="5.6" fill="#ffffff" stroke="#ffffff" stroke-width="0.3" textLength="43.5" lengthAdjust="spacingAndGlyphs" font-weight="bold">动。涂油防锈固定</text>
<rect x="0" y="0" width="790" height="7" fill="url(#tb)"/>
<rect x="790" y="0" width="241" height="7" fill="url(#tb2)"/>
<rect x="49" y="0" width="1.2" height="2.6" fill="#8c8c8c"/>
<rect x="197" y="0" width="1.2" height="2.6" fill="#8c8c8c"/>
<rect x="201.5" y="0" width="1.2" height="2.6" fill="#8c8c8c"/>
<rect x="205" y="0" width="1.2" height="2.6" fill="#8c8c8c"/>
<rect x="362" y="0" width="1.2" height="2.6" fill="#8c8c8c"/>
<rect x="530" y="0" width="1.2" height="2.6" fill="#8c8c8c"/>
<rect x="660" y="0" width="1.2" height="2.6" fill="#8c8c8c"/>
<rect x="52" y="0" width="42" height="3" fill="#e9e9e9"/>
<rect x="666" y="0" width="124" height="2.6" fill="none" stroke="#b4a0a0" stroke-width="0.8"/>
</svg>
</body></html>
